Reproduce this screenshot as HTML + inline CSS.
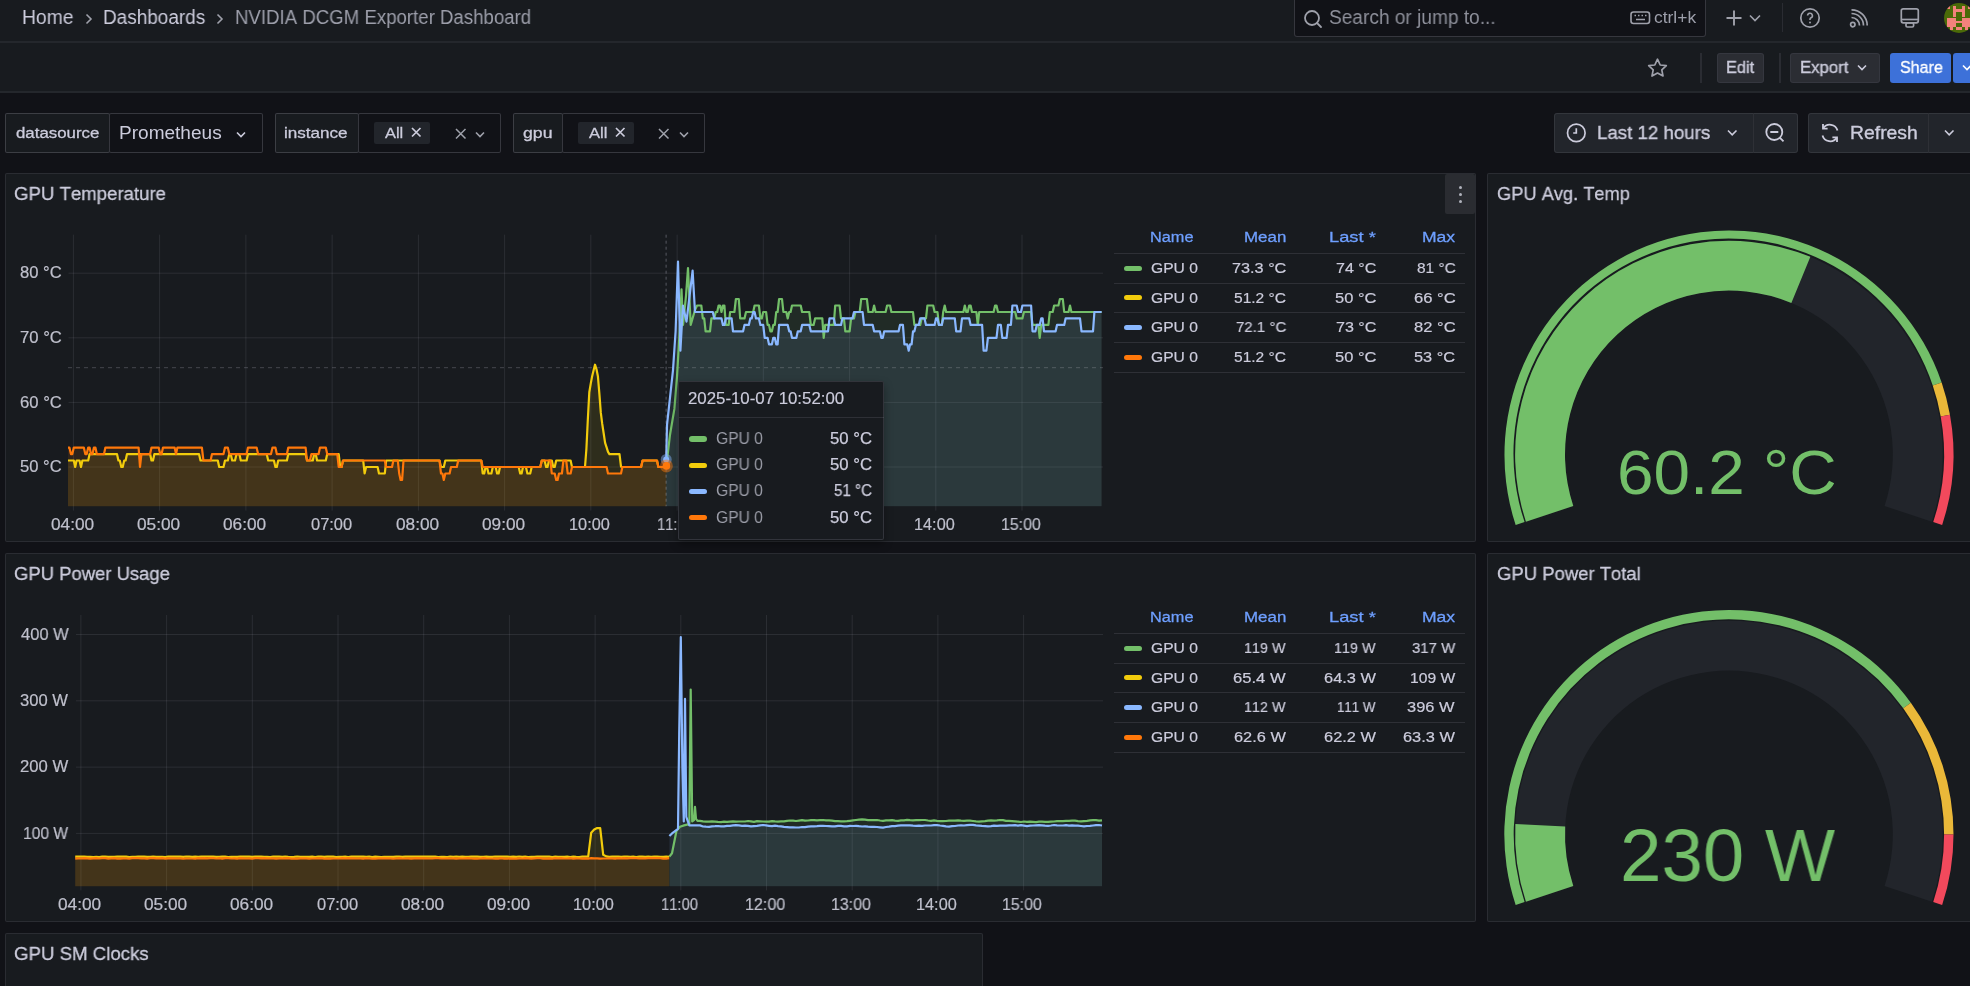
<!DOCTYPE html>
<html><head><meta charset="utf-8"><style>
html,body{margin:0;padding:0;width:1970px;height:986px;overflow:hidden;background:#111217}
body{position:relative;font-family:"Liberation Sans",sans-serif}
.r{position:absolute}
.t{position:absolute;white-space:pre;line-height:normal;will-change:transform;font-kerning:none;font-feature-settings:"kern" 0,"liga" 0}
svg.r{overflow:visible}
</style></head><body>
<div class="r" style="left:0.00px;top:0.00px;width:1970.00px;height:41.00px;background:#181b1f;"></div>
<div class="r" style="left:0.00px;top:41.00px;width:1970.00px;height:2.00px;background:#24272c;"></div>
<div class="r" style="left:0.00px;top:43.00px;width:1970.00px;height:48.00px;background:#181b1f;"></div>
<div class="r" style="left:0.00px;top:91.00px;width:1970.00px;height:2.00px;background:#24272c;"></div>
<div class="t" style="left:22.42px;top:6.15px;font-size:19.50px;color:#ccccdc;font-weight:normal;transform:scaleX(0.9889);transform-origin:0 0;">Home</div>
<div class="t" style="left:102.84px;top:6.15px;font-size:19.50px;color:#ccccdc;font-weight:normal;transform:scaleX(0.9724);transform-origin:0 0;">Dashboards</div>
<div class="t" style="left:234.57px;top:6.15px;font-size:19.50px;color:#9d9fab;font-weight:normal;transform:scaleX(0.9555);transform-origin:0 0;">NVIDIA DCGM Exporter Dashboard</div>
<svg class="r" style="left:83px;top:12px" width="12" height="14" viewBox="0 0 12 14"><path d="M3.5 2.5 L8 7 L3.5 11.5" fill="none" stroke="#9fa1ab" stroke-width="1.6"/></svg>
<svg class="r" style="left:214px;top:12px" width="12" height="14" viewBox="0 0 12 14"><path d="M3.5 2.5 L8 7 L3.5 11.5" fill="none" stroke="#9fa1ab" stroke-width="1.6"/></svg>
<div class="r" style="left:1293.50px;top:-5.00px;width:412.50px;height:42.00px;background:#111217;box-shadow:inset 0 0 0 1px rgba(204,204,220,0.2);border-radius:3px;"></div>
<svg class="r" style="left:1302px;top:8px" width="22" height="22" viewBox="0 0 22 22"><circle cx="10" cy="10" r="7" fill="none" stroke="#9fa1ab" stroke-width="1.8"/><path d="M15 15 L19 19" stroke="#9fa1ab" stroke-width="1.8" stroke-linecap="round"/></svg>
<div class="t" style="left:1328.83px;top:6.35px;font-size:19.50px;color:#8e909b;font-weight:normal;transform:scaleX(0.9791);transform-origin:0 0;">Search or jump to...</div>
<svg class="r" style="left:1630px;top:11px" width="21" height="14" viewBox="0 0 21 14"><rect x="1" y="1" width="18.5" height="11.5" rx="2.5" fill="none" stroke="#9fa1ab" stroke-width="1.6"/><path d="M4.5 4.5h1.5M8 4.5h1.5M11.5 4.5h1.5M15 4.5h1.5M6 8.5h9" stroke="#9fa1ab" stroke-width="1.4"/></svg>
<div class="t" style="left:1654.46px;top:7.77px;font-size:16.50px;color:#9d9fab;font-weight:normal;transform:scaleX(1.0560);transform-origin:0 0;">ctrl+k</div>
<svg class="r" style="left:1724px;top:8px" width="20" height="20" viewBox="0 0 20 20"><path d="M10 2.5V17.5M2.5 10H17.5" stroke="#9fa1ab" stroke-width="1.9"/></svg>
<svg class="r" style="left:1749.0px;top:13.7px" width="12" height="8" viewBox="0 0 12 8"><path d="M1 1.5 L6.0 6.5 L11.0 1.5" fill="none" stroke="#9fa1ab" stroke-width="1.6"/></svg>
<div class="r" style="left:1781.50px;top:3.00px;width:1.50px;height:29.00px;background:#2a2c32;"></div>
<svg class="r" style="left:1799px;top:7px" width="22" height="22" viewBox="0 0 22 22"><circle cx="11" cy="11" r="9.2" fill="none" stroke="#9fa1ab" stroke-width="1.7"/><path d="M8.6 8.6a2.4 2.4 0 1 1 3.4 2.2c-.6.3-1 .8-1 1.5v.6" fill="none" stroke="#9fa1ab" stroke-width="1.6"/><circle cx="11" cy="15.4" r="1" fill="#9fa1ab"/></svg>
<svg class="r" style="left:1849px;top:8px" width="21" height="21" viewBox="0 0 21 21"><circle cx="3.8" cy="16.6" r="2.2" fill="none" stroke="#9fa1ab" stroke-width="1.7"/><path d="M2.5 9.5a8 8 0 0 1 8 8M2.5 5.5a12 12 0 0 1 12 12M2.5 1.8a15.7 15.7 0 0 1 15.7 15.7" fill="none" stroke="#9fa1ab" stroke-width="1.7"/></svg>
<svg class="r" style="left:1899px;top:7px" width="22" height="22" viewBox="0 0 22 22"><rect x="2.3" y="1.8" width="17" height="14" rx="2" fill="none" stroke="#9fa1ab" stroke-width="1.7"/><path d="M2.3 12.5h17" stroke="#9fa1ab" stroke-width="1.7"/><rect x="7" y="16" width="7.6" height="4" rx="1.3" fill="none" stroke="#9fa1ab" stroke-width="1.7"/></svg>
<div class="r" style="left:1943.9px;top:2.7px;width:30.5px;height:30.5px;border-radius:50%;background:#4b6a08;overflow:hidden"><div class="r" style="left:3.1px;top:2.7px;width:3.0px;height:3.5px;background:#f3827c"></div><div class="r" style="left:9.2px;top:3.1px;width:3.1px;height:11.2px;background:#f3827c"></div><div class="r" style="left:18.1px;top:3.1px;width:3.0px;height:11.2px;background:#f3827c"></div><div class="r" style="left:9.2px;top:6.2px;width:11.9px;height:3.4px;background:#f3827c"></div><div class="r" style="left:24.3px;top:3.1px;width:3.8px;height:3.1px;background:#f3827c"></div><div class="r" style="left:3.1px;top:15.4px;width:8.8px;height:8.9px;background:#f3827c"></div><div class="r" style="left:6.5px;top:24.3px;width:2.6px;height:2.7px;background:#f3827c"></div><div class="r" style="left:18.1px;top:15.4px;width:10.0px;height:8.9px;background:#f3827c"></div><div class="r" style="left:21.6px;top:24.3px;width:2.5px;height:2.7px;background:#f3827c"></div><div class="r" style="left:12.3px;top:18.1px;width:5.8px;height:2.3px;background:#f3827c"></div><div class="r" style="left:12.3px;top:24.3px;width:5.8px;height:2.7px;background:#f3827c"></div></div>
<svg class="r" style="left:1646px;top:57px" width="23" height="22" viewBox="0 0 23 22"><path d="M11.5 2.2 L14.2 8 L20.3 8.7 L15.8 12.9 L17 19 L11.5 16 L6 19 L7.2 12.9 L2.7 8.7 L8.8 8 Z" fill="none" stroke="#9fa1ab" stroke-width="1.7" stroke-linejoin="round"/></svg>
<div class="r" style="left:1700.30px;top:53.00px;width:1.50px;height:30.00px;background:#2a2c32;"></div>
<div class="r" style="left:1716.80px;top:53.00px;width:47.20px;height:30.00px;background:#2b2d33;box-shadow:inset 0 0 0 1px rgba(204,204,220,0.07);border-radius:3px;"></div>
<div class="t" style="left:1725.95px;top:57.62px;font-size:17.00px;color:#ccccdc;font-weight:normal;transform:scaleX(0.9649);transform-origin:0 0;-webkit-text-stroke:0.35px #ccccdc;">Edit</div>
<div class="r" style="left:1779.00px;top:53.00px;width:1.50px;height:30.00px;background:#2a2c32;"></div>
<div class="r" style="left:1790.00px;top:53.00px;width:90.00px;height:30.00px;background:#2b2d33;box-shadow:inset 0 0 0 1px rgba(204,204,220,0.07);border-radius:3px;"></div>
<div class="t" style="left:1799.63px;top:57.62px;font-size:17.00px;color:#ccccdc;font-weight:normal;transform:scaleX(0.9850);transform-origin:0 0;-webkit-text-stroke:0.35px #ccccdc;">Export</div>
<svg class="r" style="left:1856.6px;top:63.9px" width="10" height="7" viewBox="0 0 10 7"><path d="M1 1.5 L5.0 5.5 L9.0 1.5" fill="none" stroke="#ccccdc" stroke-width="1.6"/></svg>
<div class="r" style="left:1890.20px;top:53.00px;width:61.20px;height:30.00px;background:#3d71d9;border-radius:3px;"></div>
<div class="t" style="left:1899.77px;top:57.62px;font-size:17.00px;color:#ffffff;font-weight:normal;transform:scaleX(0.9444);transform-origin:0 0;-webkit-text-stroke:0.35px #ffffff;">Share</div>
<div class="r" style="left:1953.20px;top:53.00px;width:21.80px;height:30.00px;background:#3d71d9;border-radius:3px;"></div>
<svg class="r" style="left:1962.0px;top:63.9px" width="10" height="7" viewBox="0 0 10 7"><path d="M1 1.5 L5.0 5.5 L9.0 1.5" fill="none" stroke="#ffffff" stroke-width="1.6"/></svg>
<div class="r" style="left:5.00px;top:113.00px;width:105.00px;height:40.00px;background:#181b1f;box-shadow:inset 0 0 0 1px rgba(204,204,220,0.2);border-radius:2px;"></div>
<div class="t" style="left:15.79px;top:123.67px;font-size:15.50px;color:#ccccdc;font-weight:normal;transform:scaleX(1.0869);transform-origin:0 0;-webkit-text-stroke:0.3px #ccccdc;">datasource</div>
<div class="r" style="left:109.00px;top:113.00px;width:153.50px;height:40.00px;background:#111217;box-shadow:inset 0 0 0 1px rgba(204,204,220,0.2);border-radius:2px;"></div>
<div class="t" style="left:118.94px;top:121.69px;font-size:18.80px;color:#ccccdc;font-weight:normal;transform:scaleX(1.0137);transform-origin:0 0;">Prometheus</div>
<svg class="r" style="left:236.3px;top:130.9px" width="10" height="7" viewBox="0 0 10 7"><path d="M1 1.5 L5.0 5.5 L9.0 1.5" fill="none" stroke="#ccccdc" stroke-width="1.6"/></svg>
<div class="r" style="left:274.50px;top:113.00px;width:84.50px;height:40.00px;background:#181b1f;box-shadow:inset 0 0 0 1px rgba(204,204,220,0.2);border-radius:2px;"></div>
<div class="t" style="left:284.06px;top:123.77px;font-size:15.50px;color:#ccccdc;font-weight:normal;transform:scaleX(1.1017);transform-origin:0 0;-webkit-text-stroke:0.3px #ccccdc;">instance</div>
<div class="r" style="left:358.00px;top:113.00px;width:143.00px;height:40.00px;background:#111217;box-shadow:inset 0 0 0 1px rgba(204,204,220,0.2);border-radius:2px;"></div>
<div class="r" style="left:374.00px;top:121.70px;width:56.00px;height:22.00px;background:#22252b;border-radius:2px;"></div>
<div class="t" style="left:384.87px;top:123.77px;font-size:15.50px;color:#ccccdc;font-weight:normal;transform:scaleX(1.0583);transform-origin:0 0;-webkit-text-stroke:0.3px #ccccdc;">All</div>
<svg class="r" style="left:410.4px;top:126.2px" width="12" height="12" viewBox="0 0 12 12"><path d="M2 2L10.5 10.5M10.5 2L2 10.5" stroke="#ccccdc" stroke-width="1.7"/></svg>
<svg class="r" style="left:453.6px;top:127.4px" width="13" height="13" viewBox="0 0 13 13"><path d="M2 2L11.5 11.5M11.5 2L2 11.5" stroke="#9fa1ab" stroke-width="1.5"/></svg>
<svg class="r" style="left:475.3px;top:130.5px" width="10" height="7" viewBox="0 0 10 7"><path d="M1 1.5 L5.0 5.5 L9.0 1.5" fill="none" stroke="#9fa1ab" stroke-width="1.6"/></svg>
<div class="r" style="left:513.30px;top:113.00px;width:49.70px;height:40.00px;background:#181b1f;box-shadow:inset 0 0 0 1px rgba(204,204,220,0.2);border-radius:2px;"></div>
<div class="t" style="left:523.06px;top:123.77px;font-size:15.50px;color:#ccccdc;font-weight:normal;transform:scaleX(1.1414);transform-origin:0 0;-webkit-text-stroke:0.3px #ccccdc;">gpu</div>
<div class="r" style="left:562.00px;top:113.00px;width:143.00px;height:40.00px;background:#111217;box-shadow:inset 0 0 0 1px rgba(204,204,220,0.2);border-radius:2px;"></div>
<div class="r" style="left:578.00px;top:121.70px;width:55.60px;height:22.00px;background:#22252b;border-radius:2px;"></div>
<div class="t" style="left:588.67px;top:123.77px;font-size:15.50px;color:#ccccdc;font-weight:normal;transform:scaleX(1.0706);transform-origin:0 0;-webkit-text-stroke:0.3px #ccccdc;">All</div>
<svg class="r" style="left:614.2px;top:126.2px" width="12" height="12" viewBox="0 0 12 12"><path d="M2 2L10.5 10.5M10.5 2L2 10.5" stroke="#ccccdc" stroke-width="1.7"/></svg>
<svg class="r" style="left:656.5px;top:127.4px" width="13" height="13" viewBox="0 0 13 13"><path d="M2 2L11.5 11.5M11.5 2L2 11.5" stroke="#9fa1ab" stroke-width="1.5"/></svg>
<svg class="r" style="left:679.0px;top:130.5px" width="10" height="7" viewBox="0 0 10 7"><path d="M1 1.5 L5.0 5.5 L9.0 1.5" fill="none" stroke="#9fa1ab" stroke-width="1.6"/></svg>
<div class="r" style="left:1554.00px;top:113.00px;width:243.50px;height:39.50px;background:#22252b;box-shadow:inset 0 0 0 1px rgba(204,204,220,0.1);border-radius:3px;"></div>
<div class="r" style="left:1753.00px;top:113.00px;width:1.20px;height:39.50px;background:#2e3036;"></div>
<svg class="r" style="left:1565px;top:122px" width="23" height="23" viewBox="0 0 23 23"><circle cx="11.3" cy="10.9" r="8.8" fill="none" stroke="#ccccdc" stroke-width="1.7"/><path d="M11.3 6.3V11H8.2" fill="none" stroke="#ccccdc" stroke-width="1.7"/></svg>
<div class="t" style="left:1596.57px;top:121.52px;font-size:19.20px;color:#ccccdc;font-weight:normal;transform:scaleX(0.9739);transform-origin:0 0;-webkit-text-stroke:0.35px #ccccdc;">Last 12 hours</div>
<svg class="r" style="left:1727.3px;top:129.4px" width="10" height="7" viewBox="0 0 10 7"><path d="M1 1.5 L5.2 5.8 L9.5 1.5" fill="none" stroke="#ccccdc" stroke-width="1.6"/></svg>
<svg class="r" style="left:1763px;top:121px" width="24" height="24" viewBox="0 0 24 24"><circle cx="11.3" cy="11" r="8" fill="none" stroke="#ccccdc" stroke-width="1.8"/><path d="M7.3 11h8M17 16.8l3.5 3.5" fill="none" stroke="#ccccdc" stroke-width="1.8"/></svg>
<div class="r" style="left:1808.00px;top:113.00px;width:167.00px;height:39.50px;background:#22252b;box-shadow:inset 0 0 0 1px rgba(204,204,220,0.1);border-radius:3px;"></div>
<div class="r" style="left:1928.00px;top:113.00px;width:1.20px;height:39.50px;background:#2e3036;"></div>
<svg class="r" style="left:1818px;top:121px" width="24" height="24" viewBox="0 0 24 24"><path d="M19.5 9.5A8 8 0 0 0 5.2 7.2M4.5 14.5a8 8 0 0 0 14.3 2.3" fill="none" stroke="#ccccdc" stroke-width="1.8"/><path d="M5 3v4.6h4.6M19 21v-4.6h-4.6" fill="none" stroke="#ccccdc" stroke-width="1.8"/></svg>
<div class="t" style="left:1850.41px;top:121.52px;font-size:19.20px;color:#ccccdc;font-weight:normal;transform:scaleX(1.0092);transform-origin:0 0;-webkit-text-stroke:0.35px #ccccdc;">Refresh</div>
<svg class="r" style="left:1943.5px;top:129.4px" width="10" height="7" viewBox="0 0 10 7"><path d="M1 1.5 L5.2 5.8 L9.5 1.5" fill="none" stroke="#ccccdc" stroke-width="1.6"/></svg>
<div class="r" style="left:4.50px;top:173.00px;width:1471.50px;height:369.00px;background:#181b1f;box-shadow:inset 0 0 0 1px #2a2c32;border-radius:2px;"></div>
<div class="r" style="left:1487.00px;top:173.00px;width:493.00px;height:369.00px;background:#181b1f;box-shadow:inset 0 0 0 1px #2a2c32;border-radius:2px;"></div>
<div class="r" style="left:4.50px;top:553.00px;width:1471.50px;height:369.00px;background:#181b1f;box-shadow:inset 0 0 0 1px #2a2c32;border-radius:2px;"></div>
<div class="r" style="left:1487.00px;top:553.00px;width:493.00px;height:369.00px;background:#181b1f;box-shadow:inset 0 0 0 1px #2a2c32;border-radius:2px;"></div>
<div class="r" style="left:4.50px;top:933.00px;width:978.00px;height:67.00px;background:#181b1f;box-shadow:inset 0 0 0 1px #2a2c32;border-radius:2px;"></div>
<div class="t" style="left:14.46px;top:182.62px;font-size:19.20px;color:#ccccdc;font-weight:normal;transform:scaleX(0.9695);transform-origin:0 0;-webkit-text-stroke:0.3px #ccccdc;">GPU Temperature</div>
<div class="t" style="left:1497.08px;top:182.62px;font-size:19.20px;color:#ccccdc;font-weight:normal;transform:scaleX(0.9514);transform-origin:0 0;-webkit-text-stroke:0.3px #ccccdc;">GPU Avg. Temp</div>
<div class="t" style="left:14.47px;top:562.62px;font-size:19.20px;color:#ccccdc;font-weight:normal;transform:scaleX(0.9615);transform-origin:0 0;-webkit-text-stroke:0.3px #ccccdc;">GPU Power Usage</div>
<div class="t" style="left:1497.07px;top:562.62px;font-size:19.20px;color:#ccccdc;font-weight:normal;transform:scaleX(0.9631);transform-origin:0 0;-webkit-text-stroke:0.3px #ccccdc;">GPU Power Total</div>
<div class="t" style="left:14.36px;top:942.62px;font-size:19.20px;color:#ccccdc;font-weight:normal;transform:scaleX(0.9714);transform-origin:0 0;-webkit-text-stroke:0.3px #ccccdc;">GPU SM Clocks</div>
<div class="r" style="left:1445.30px;top:173.50px;width:30.20px;height:40.00px;background:#2a2c31;border-radius:2px;"></div>
<div class="r" style="left:1458.7px;top:185.9px;width:3.2px;height:3.2px;border-radius:50%;background:#b0b2bc"></div>
<div class="r" style="left:1458.7px;top:192.9px;width:3.2px;height:3.2px;border-radius:50%;background:#b0b2bc"></div>
<div class="r" style="left:1458.7px;top:199.9px;width:3.2px;height:3.2px;border-radius:50%;background:#b0b2bc"></div>
<svg class="r" style="left:0px;top:170px" width="1480" height="380" viewBox="0 170 1480 380"><path d="M68.5 273.2H1103.0" stroke="rgba(204,204,220,0.11)" stroke-width="1"/><path d="M68.5 337.8H1103.0" stroke="rgba(204,204,220,0.11)" stroke-width="1"/><path d="M68.5 402.4H1103.0" stroke="rgba(204,204,220,0.11)" stroke-width="1"/><path d="M68.5 467.0H1103.0" stroke="rgba(204,204,220,0.11)" stroke-width="1"/><path d="M73.4 234.7V510.6" stroke="rgba(204,204,220,0.11)" stroke-width="1"/><path d="M159.6 234.7V510.6" stroke="rgba(204,204,220,0.11)" stroke-width="1"/><path d="M245.9 234.7V510.6" stroke="rgba(204,204,220,0.11)" stroke-width="1"/><path d="M332.1 234.7V510.6" stroke="rgba(204,204,220,0.11)" stroke-width="1"/><path d="M418.4 234.7V510.6" stroke="rgba(204,204,220,0.11)" stroke-width="1"/><path d="M504.6 234.7V510.6" stroke="rgba(204,204,220,0.11)" stroke-width="1"/><path d="M590.8 234.7V510.6" stroke="rgba(204,204,220,0.11)" stroke-width="1"/><path d="M677.1 234.7V510.6" stroke="rgba(204,204,220,0.11)" stroke-width="1"/><path d="M763.3 234.7V510.6" stroke="rgba(204,204,220,0.11)" stroke-width="1"/><path d="M849.6 234.7V510.6" stroke="rgba(204,204,220,0.11)" stroke-width="1"/><path d="M935.8 234.7V510.6" stroke="rgba(204,204,220,0.11)" stroke-width="1"/><path d="M1022.0 234.7V510.6" stroke="rgba(204,204,220,0.11)" stroke-width="1"/><path d="M666.2 467.0 L670.0 434.7 L674.4 408.9 L677.0 376.6 L680.0 324.9 L681.5 289.4 L683.0 324.9 L686.0 295.8 L688.0 268.0 L690.7 324.9 L695.0 310.0 L697.0 305.5 L698.4 305.5 L699.9 305.5 L701.3 305.5 L702.8 318.4 L704.2 318.4 L705.6 331.3 L707.1 331.3 L708.5 331.3 L710.0 331.3 L711.4 318.4 L712.8 318.4 L714.3 318.4 L715.7 312.0 L717.2 312.0 L718.6 305.5 L720.0 305.5 L721.5 312.0 L722.9 305.5 L724.4 305.5 L725.8 324.9 L727.2 324.9 L728.7 324.9 L730.1 312.0 L731.6 312.0 L733.0 312.0 L734.4 312.0 L735.9 299.0 L737.3 299.0 L738.8 299.0 L740.2 318.4 L741.6 318.4 L743.1 318.4 L744.5 318.4 L746.0 312.0 L747.4 312.0 L748.8 312.0 L750.3 312.0 L751.7 312.0 L753.2 312.0 L754.6 305.5 L756.0 305.5 L757.5 305.5 L758.9 305.5 L760.4 318.4 L761.8 318.4 L763.2 312.0 L764.7 312.0 L766.1 312.0 L767.6 324.9 L769.0 324.9 L770.4 331.3 L771.9 331.3 L773.3 324.9 L774.8 324.9 L776.2 312.0 L777.6 312.0 L779.1 299.0 L780.5 299.0 L782.0 299.0 L783.4 312.0 L784.8 312.0 L786.3 312.0 L787.7 318.4 L789.2 312.0 L790.6 312.0 L792.0 305.5 L793.5 305.5 L794.9 305.5 L796.4 305.5 L797.8 305.5 L799.2 305.5 L800.7 305.5 L802.1 312.0 L803.6 312.0 L805.0 312.0 L806.4 312.0 L807.9 312.0 L809.3 312.0 L810.8 324.9 L812.2 324.9 L813.6 324.9 L815.1 318.4 L816.5 318.4 L818.0 318.4 L819.4 318.4 L820.8 318.4 L822.3 318.4 L823.7 337.8 L825.2 324.9 L826.6 324.9 L828.0 324.9 L829.5 324.9 L830.9 324.9 L832.4 324.9 L833.8 324.9 L835.2 305.5 L836.7 305.5 L838.1 305.5 L839.6 305.5 L841.0 318.4 L842.4 318.4 L843.9 318.4 L845.3 331.3 L846.8 331.3 L848.2 331.3 L849.6 331.3 L851.1 318.4 L852.5 318.4 L854.0 318.4 L855.4 312.0 L856.8 312.0 L858.3 312.0 L859.7 312.0 L861.2 299.0 L862.6 299.0 L864.0 299.0 L865.5 299.0 L866.9 299.0 L868.4 312.0 L869.8 312.0 L871.2 312.0 L872.7 312.0 L874.1 305.5 L875.6 312.0 L877.0 312.0 L878.4 312.0 L879.9 312.0 L881.3 312.0 L882.8 312.0 L884.2 312.0 L885.6 312.0 L887.1 305.5 L888.5 305.5 L890.0 305.5 L891.4 312.0 L892.8 312.0 L894.3 312.0 L895.7 312.0 L897.2 312.0 L898.6 312.0 L900.0 312.0 L901.5 312.0 L902.9 312.0 L904.4 312.0 L905.8 312.0 L907.2 312.0 L908.7 312.0 L910.1 312.0 L911.6 312.0 L913.0 312.0 L914.4 324.9 L915.9 324.9 L917.3 324.9 L918.8 324.9 L920.2 324.9 L921.6 318.4 L923.1 318.4 L924.5 318.4 L926.0 318.4 L927.4 305.5 L928.8 305.5 L930.3 305.5 L931.7 305.5 L933.2 305.5 L934.6 312.0 L936.0 312.0 L937.5 312.0 L938.9 324.9 L940.4 324.9 L941.8 324.9 L943.2 312.0 L944.7 305.5 L946.1 312.0 L947.6 312.0 L949.0 312.0 L950.4 312.0 L951.9 312.0 L953.3 312.0 L954.8 312.0 L956.2 312.0 L957.6 312.0 L959.1 312.0 L960.5 312.0 L962.0 312.0 L963.4 312.0 L964.8 305.5 L966.3 312.0 L967.7 312.0 L969.2 305.5 L970.6 305.5 L972.0 312.0 L973.5 312.0 L974.9 312.0 L976.4 312.0 L977.8 324.9 L979.2 312.0 L980.7 312.0 L982.1 312.0 L983.6 312.0 L985.0 312.0 L986.4 312.0 L987.9 312.0 L989.3 312.0 L990.8 312.0 L992.2 312.0 L993.6 312.0 L995.1 305.5 L996.5 305.5 L998.0 312.0 L999.4 312.0 L1000.8 312.0 L1002.3 312.0 L1003.7 312.0 L1005.2 312.0 L1006.6 312.0 L1008.0 312.0 L1009.5 312.0 L1010.9 312.0 L1012.4 312.0 L1013.8 312.0 L1015.2 312.0 L1016.7 318.4 L1018.1 318.4 L1019.6 318.4 L1021.0 318.4 L1022.4 318.4 L1023.9 312.0 L1025.3 312.0 L1026.8 312.0 L1028.2 312.0 L1029.6 312.0 L1031.1 312.0 L1032.5 324.9 L1034.0 324.9 L1035.4 324.9 L1036.8 324.9 L1038.3 324.9 L1039.7 337.8 L1041.2 324.9 L1042.6 324.9 L1044.0 324.9 L1045.5 324.9 L1046.9 324.9 L1048.4 324.9 L1049.8 312.0 L1051.2 312.0 L1052.7 312.0 L1054.1 305.5 L1055.6 305.5 L1057.0 305.5 L1058.4 305.5 L1059.9 299.0 L1061.3 299.0 L1062.8 299.0 L1064.2 312.0 L1065.6 312.0 L1067.1 312.0 L1068.5 312.0 L1070.0 305.5 L1071.4 312.0 L1072.8 312.0 L1074.3 312.0 L1075.7 312.0 L1077.2 312.0 L1078.6 312.0 L1080.0 312.0 L1081.5 312.0 L1082.9 312.0 L1084.4 312.0 L1085.8 312.0 L1087.2 312.0 L1088.7 312.0 L1090.1 312.0 L1091.6 312.0 L1093.0 312.0 L1094.4 312.0 L1095.9 312.0 L1097.3 312.0 L1098.8 312.0 L1100.2 312.0 L1101.6 312.0 L1101.6 506.3 L666.2 506.3 Z" fill="#73bf69" fill-opacity="0.10"/><path d="M666.2 460.5 L667.0 425.0 L673.0 370.1 L675.6 331.3 L678.0 261.6 L680.4 350.7 L682.9 305.5 L686.5 321.6 L692.6 270.6 L695.0 312.0 L697.0 312.0 L698.4 312.0 L699.9 312.0 L701.3 312.0 L702.8 312.0 L704.2 312.0 L705.6 312.0 L707.1 312.0 L708.5 312.0 L710.0 312.0 L711.4 312.0 L712.8 312.0 L714.3 318.4 L715.7 318.4 L717.2 318.4 L718.6 318.4 L720.0 318.4 L721.5 318.4 L722.9 324.9 L724.4 324.9 L725.8 318.4 L727.2 318.4 L728.7 318.4 L730.1 318.4 L731.6 318.4 L733.0 331.3 L734.4 331.3 L735.9 331.3 L737.3 331.3 L738.8 331.3 L740.2 331.3 L741.6 331.3 L743.1 331.3 L744.5 324.9 L746.0 324.9 L747.4 324.9 L748.8 324.9 L750.3 318.4 L751.7 318.4 L753.2 312.0 L754.6 312.0 L756.0 318.4 L757.5 318.4 L758.9 318.4 L760.4 324.9 L761.8 324.9 L763.2 324.9 L764.7 337.8 L766.1 337.8 L767.6 337.8 L769.0 344.3 L770.4 344.3 L771.9 344.3 L773.3 337.8 L774.8 337.8 L776.2 344.3 L777.6 344.3 L779.1 324.9 L780.5 324.9 L782.0 324.9 L783.4 324.9 L784.8 324.9 L786.3 324.9 L787.7 324.9 L789.2 331.3 L790.6 331.3 L792.0 337.8 L793.5 337.8 L794.9 337.8 L796.4 337.8 L797.8 331.3 L799.2 331.3 L800.7 331.3 L802.1 324.9 L803.6 324.9 L805.0 324.9 L806.4 324.9 L807.9 324.9 L809.3 324.9 L810.8 331.3 L812.2 331.3 L813.6 331.3 L815.1 331.3 L816.5 331.3 L818.0 331.3 L819.4 331.3 L820.8 331.3 L822.3 331.3 L823.7 331.3 L825.2 331.3 L826.6 331.3 L828.0 331.3 L829.5 318.4 L830.9 318.4 L832.4 318.4 L833.8 318.4 L835.2 324.9 L836.7 324.9 L838.1 324.9 L839.6 324.9 L841.0 324.9 L842.4 318.4 L843.9 318.4 L845.3 318.4 L846.8 318.4 L848.2 318.4 L849.6 318.4 L851.1 318.4 L852.5 318.4 L854.0 312.0 L855.4 312.0 L856.8 312.0 L858.3 312.0 L859.7 312.0 L861.2 312.0 L862.6 312.0 L864.0 324.9 L865.5 324.9 L866.9 324.9 L868.4 324.9 L869.8 324.9 L871.2 324.9 L872.7 324.9 L874.1 331.3 L875.6 331.3 L877.0 331.3 L878.4 331.3 L879.9 331.3 L881.3 337.8 L882.8 337.8 L884.2 331.3 L885.6 331.3 L887.1 331.3 L888.5 331.3 L890.0 331.3 L891.4 331.3 L892.8 331.3 L894.3 331.3 L895.7 331.3 L897.2 331.3 L898.6 331.3 L900.0 324.9 L901.5 324.9 L902.9 324.9 L904.4 344.3 L905.8 344.3 L907.2 344.3 L908.7 350.7 L910.1 344.3 L911.6 344.3 L913.0 331.3 L914.4 331.3 L915.9 324.9 L917.3 324.9 L918.8 324.9 L920.2 318.4 L921.6 318.4 L923.1 318.4 L924.5 318.4 L926.0 324.9 L927.4 324.9 L928.8 324.9 L930.3 324.9 L931.7 324.9 L933.2 324.9 L934.6 324.9 L936.0 318.4 L937.5 318.4 L938.9 324.9 L940.4 324.9 L941.8 324.9 L943.2 318.4 L944.7 318.4 L946.1 318.4 L947.6 318.4 L949.0 318.4 L950.4 318.4 L951.9 318.4 L953.3 318.4 L954.8 318.4 L956.2 331.3 L957.6 331.3 L959.1 331.3 L960.5 331.3 L962.0 318.4 L963.4 318.4 L964.8 318.4 L966.3 318.4 L967.7 318.4 L969.2 318.4 L970.6 324.9 L972.0 324.9 L973.5 324.9 L974.9 324.9 L976.4 324.9 L977.8 324.9 L979.2 324.9 L980.7 324.9 L982.1 324.9 L983.6 350.7 L985.0 350.7 L986.4 350.7 L987.9 337.8 L989.3 337.8 L990.8 337.8 L992.2 337.8 L993.6 337.8 L995.1 337.8 L996.5 337.8 L998.0 324.9 L999.4 324.9 L1000.8 324.9 L1002.3 337.8 L1003.7 337.8 L1005.2 337.8 L1006.6 337.8 L1008.0 324.9 L1009.5 324.9 L1010.9 324.9 L1012.4 305.5 L1013.8 305.5 L1015.2 305.5 L1016.7 305.5 L1018.1 312.0 L1019.6 312.0 L1021.0 312.0 L1022.4 305.5 L1023.9 305.5 L1025.3 305.5 L1026.8 305.5 L1028.2 305.5 L1029.6 305.5 L1031.1 305.5 L1032.5 331.3 L1034.0 331.3 L1035.4 331.3 L1036.8 324.9 L1038.3 324.9 L1039.7 324.9 L1041.2 318.4 L1042.6 318.4 L1044.0 331.3 L1045.5 331.3 L1046.9 331.3 L1048.4 331.3 L1049.8 331.3 L1051.2 331.3 L1052.7 331.3 L1054.1 331.3 L1055.6 331.3 L1057.0 324.9 L1058.4 324.9 L1059.9 324.9 L1061.3 324.9 L1062.8 324.9 L1064.2 324.9 L1065.6 318.4 L1067.1 318.4 L1068.5 318.4 L1070.0 318.4 L1071.4 318.4 L1072.8 318.4 L1074.3 318.4 L1075.7 318.4 L1077.2 318.4 L1078.6 318.4 L1080.0 318.4 L1081.5 331.3 L1082.9 331.3 L1084.4 331.3 L1085.8 331.3 L1087.2 331.3 L1088.7 331.3 L1090.1 331.3 L1091.6 331.3 L1093.0 331.3 L1094.4 312.0 L1095.9 312.0 L1097.3 312.0 L1098.8 312.0 L1100.2 312.0 L1101.6 312.0 L1101.6 506.3 L666.2 506.3 Z" fill="#8ab8ff" fill-opacity="0.10"/><path d="M68.0 447.6 L69.4 447.6 L70.9 454.1 L72.3 454.1 L73.8 447.6 L75.2 447.6 L76.6 447.6 L78.1 447.6 L79.5 447.6 L81.0 447.6 L82.4 447.6 L83.8 447.6 L85.3 454.1 L86.7 454.1 L88.2 447.6 L89.6 447.6 L91.0 454.1 L92.5 454.1 L93.9 447.6 L95.4 447.6 L96.8 454.1 L98.2 454.1 L99.7 454.1 L101.1 454.1 L102.6 454.1 L104.0 454.1 L105.4 447.6 L106.9 447.6 L108.3 447.6 L109.8 447.6 L111.2 447.6 L112.6 447.6 L114.1 447.6 L115.5 447.6 L117.0 447.6 L118.4 447.6 L119.8 447.6 L121.3 447.6 L122.7 447.6 L124.2 447.6 L125.6 447.6 L127.0 447.6 L128.5 447.6 L129.9 447.6 L131.4 447.6 L132.8 447.6 L134.2 447.6 L135.7 447.6 L137.1 447.6 L138.6 447.6 L140.0 467.0 L141.4 454.1 L142.9 454.1 L144.3 454.1 L145.8 454.1 L147.2 454.1 L148.6 454.1 L150.1 454.1 L151.5 447.6 L153.0 447.6 L154.4 447.6 L155.8 447.6 L157.3 447.6 L158.7 447.6 L160.2 454.1 L161.6 454.1 L163.0 447.6 L164.5 447.6 L165.9 447.6 L167.4 447.6 L168.8 447.6 L170.2 447.6 L171.7 447.6 L173.1 447.6 L174.6 447.6 L176.0 454.1 L177.4 447.6 L178.9 447.6 L180.3 447.6 L181.8 447.6 L183.2 447.6 L184.6 447.6 L186.1 447.6 L187.5 447.6 L189.0 447.6 L190.4 447.6 L191.8 447.6 L193.3 447.6 L194.7 447.6 L196.2 447.6 L197.6 447.6 L199.0 447.6 L200.5 447.6 L201.9 447.6 L203.4 460.5 L204.8 460.5 L206.2 460.5 L207.7 460.5 L209.1 460.5 L210.6 460.5 L212.0 454.1 L213.4 454.1 L214.9 454.1 L216.3 454.1 L217.8 454.1 L219.2 454.1 L220.6 454.1 L222.1 454.1 L223.5 454.1 L225.0 447.6 L226.4 447.6 L227.8 447.6 L229.3 454.1 L230.7 454.1 L232.2 454.1 L233.6 454.1 L235.0 454.1 L236.5 454.1 L237.9 454.1 L239.4 454.1 L240.8 454.1 L242.2 454.1 L243.7 454.1 L245.1 454.1 L246.6 454.1 L248.0 447.6 L249.4 447.6 L250.9 447.6 L252.3 447.6 L253.8 447.6 L255.2 447.6 L256.6 447.6 L258.1 454.1 L259.5 454.1 L261.0 454.1 L262.4 454.1 L263.8 454.1 L265.3 454.1 L266.7 454.1 L268.2 454.1 L269.6 454.1 L271.0 454.1 L272.5 447.6 L273.9 447.6 L275.4 447.6 L276.8 454.1 L278.2 454.1 L279.7 454.1 L281.1 454.1 L282.6 454.1 L284.0 454.1 L285.4 454.1 L286.9 454.1 L288.3 447.6 L289.8 447.6 L291.2 447.6 L292.6 447.6 L294.1 447.6 L295.5 447.6 L297.0 447.6 L298.4 447.6 L299.8 447.6 L301.3 447.6 L302.7 447.6 L304.2 447.6 L305.6 447.6 L307.0 460.5 L308.5 460.5 L309.9 460.5 L311.4 454.1 L312.8 454.1 L314.2 454.1 L315.7 454.1 L317.1 454.1 L318.6 454.1 L320.0 447.6 L321.4 447.6 L322.9 447.6 L324.3 447.6 L325.8 447.6 L327.2 454.1 L328.6 454.1 L330.1 454.1 L331.5 454.1 L333.0 454.1 L334.4 454.1 L335.8 454.1 L337.3 454.1 L338.7 467.0 L340.2 467.0 L341.6 467.0 L343.0 460.5 L344.5 460.5 L345.9 460.5 L347.4 460.5 L348.8 460.5 L350.2 460.5 L351.7 460.5 L353.1 460.5 L354.6 460.5 L356.0 460.5 L357.4 460.5 L358.9 460.5 L360.3 460.5 L361.8 460.5 L363.2 460.5 L364.6 460.5 L366.1 460.5 L367.5 460.5 L369.0 460.5 L370.4 460.5 L371.8 460.5 L373.3 460.5 L374.7 460.5 L376.2 460.5 L377.6 460.5 L379.0 460.5 L380.5 460.5 L381.9 460.5 L383.4 460.5 L384.8 460.5 L386.2 467.0 L387.7 467.0 L389.1 467.0 L390.6 467.0 L392.0 467.0 L393.4 460.5 L394.9 460.5 L396.3 460.5 L397.8 460.5 L399.2 473.5 L400.6 479.9 L402.1 479.9 L403.5 460.5 L405.0 460.5 L406.4 460.5 L407.8 460.5 L409.3 460.5 L410.7 460.5 L412.2 460.5 L413.6 460.5 L415.0 460.5 L416.5 460.5 L417.9 460.5 L419.4 460.5 L420.8 460.5 L422.2 460.5 L423.7 460.5 L425.1 460.5 L426.6 460.5 L428.0 460.5 L429.4 460.5 L430.9 460.5 L432.3 460.5 L433.8 460.5 L435.2 460.5 L436.6 460.5 L438.1 460.5 L439.5 460.5 L441.0 473.5 L442.4 473.5 L443.8 479.9 L445.3 473.5 L446.7 473.5 L448.2 473.5 L449.6 473.5 L451.0 467.0 L452.5 467.0 L453.9 467.0 L455.4 467.0 L456.8 467.0 L458.2 460.5 L459.7 460.5 L461.1 460.5 L462.6 460.5 L464.0 460.5 L465.4 460.5 L466.9 460.5 L468.3 460.5 L469.8 460.5 L471.2 460.5 L472.6 460.5 L474.1 460.5 L475.5 460.5 L477.0 460.5 L478.4 460.5 L479.8 460.5 L481.3 460.5 L482.7 467.0 L484.2 467.0 L485.6 467.0 L487.0 467.0 L488.5 467.0 L489.9 467.0 L491.4 467.0 L492.8 467.0 L494.2 467.0 L495.7 467.0 L497.1 467.0 L498.6 467.0 L500.0 467.0 L501.4 467.0 L502.9 467.0 L504.3 467.0 L505.8 467.0 L507.2 467.0 L508.6 467.0 L510.1 467.0 L511.5 467.0 L513.0 467.0 L514.4 467.0 L515.8 467.0 L517.3 467.0 L518.7 467.0 L520.2 467.0 L521.6 467.0 L523.0 467.0 L524.5 467.0 L525.9 467.0 L527.4 467.0 L528.8 467.0 L530.2 467.0 L531.7 467.0 L533.1 467.0 L534.6 467.0 L536.0 467.0 L537.4 467.0 L538.9 467.0 L540.3 467.0 L541.8 460.5 L543.2 460.5 L544.6 460.5 L546.1 460.5 L547.5 460.5 L549.0 460.5 L550.4 460.5 L551.8 473.5 L553.3 473.5 L554.7 473.5 L556.2 479.9 L557.6 479.9 L559.0 473.5 L560.5 473.5 L561.9 473.5 L563.4 460.5 L564.8 460.5 L566.2 460.5 L567.7 473.5 L569.1 473.5 L570.6 473.5 L572.0 467.0 L573.4 467.0 L574.9 467.0 L576.3 467.0 L577.8 467.0 L579.2 467.0 L580.6 467.0 L582.1 467.0 L583.5 467.0 L585.0 467.0 L586.4 467.0 L587.8 467.0 L589.3 467.0 L590.7 467.0 L592.2 467.0 L593.6 467.0 L595.0 467.0 L596.5 467.0 L597.9 467.0 L599.4 467.0 L600.8 467.0 L602.2 467.0 L603.7 467.0 L605.1 467.0 L606.6 467.0 L608.0 473.5 L609.4 473.5 L610.9 473.5 L612.3 473.5 L613.8 473.5 L615.2 473.5 L616.6 473.5 L618.1 473.5 L619.5 473.5 L621.0 473.5 L622.4 467.0 L623.8 467.0 L625.3 467.0 L626.7 467.0 L628.2 467.0 L629.6 467.0 L631.0 467.0 L632.5 467.0 L633.9 467.0 L635.4 467.0 L636.8 467.0 L638.2 467.0 L639.7 467.0 L641.1 467.0 L642.6 460.5 L644.0 460.5 L645.4 460.5 L646.9 460.5 L648.3 460.5 L649.8 460.5 L651.2 460.5 L652.6 460.5 L654.1 460.5 L655.5 460.5 L657.0 460.5 L658.4 467.0 L659.8 467.0 L661.3 467.0 L662.7 467.0 L664.2 467.0 L665.6 467.0 L666.2 467.0 L666.2 506.3 L68.0 506.3 Z" fill="#ff780a" fill-opacity="0.10"/><path d="M68.0 460.5 L69.4 460.5 L70.9 460.5 L72.3 460.5 L73.8 460.5 L75.2 467.0 L76.6 460.5 L78.1 460.5 L79.5 460.5 L81.0 467.0 L82.4 460.5 L83.8 460.5 L85.3 460.5 L86.7 460.5 L88.2 460.5 L89.6 454.1 L91.0 454.1 L92.5 454.1 L93.9 454.1 L95.4 454.1 L96.8 454.1 L98.2 454.1 L99.7 454.1 L101.1 454.1 L102.6 454.1 L104.0 454.1 L105.4 454.1 L106.9 454.1 L108.3 454.1 L109.8 454.1 L111.2 454.1 L112.6 454.1 L114.1 454.1 L115.5 454.1 L117.0 454.1 L118.4 460.5 L119.8 460.5 L121.3 467.0 L122.7 467.0 L124.2 460.5 L125.6 460.5 L127.0 454.1 L128.5 454.1 L129.9 454.1 L131.4 454.1 L132.8 454.1 L134.2 454.1 L135.7 454.1 L137.1 454.1 L138.6 454.1 L140.0 454.1 L141.4 454.1 L142.9 454.1 L144.3 454.1 L145.8 454.1 L147.2 454.1 L148.6 454.1 L150.1 454.1 L151.5 460.5 L153.0 460.5 L154.4 454.1 L155.8 454.1 L157.3 454.1 L158.7 454.1 L160.2 454.1 L161.6 454.1 L163.0 454.1 L164.5 454.1 L165.9 454.1 L167.4 454.1 L168.8 454.1 L170.2 454.1 L171.7 454.1 L173.1 454.1 L174.6 454.1 L176.0 454.1 L177.4 454.1 L178.9 454.1 L180.3 454.1 L181.8 454.1 L183.2 454.1 L184.6 454.1 L186.1 454.1 L187.5 454.1 L189.0 454.1 L190.4 454.1 L191.8 454.1 L193.3 454.1 L194.7 454.1 L196.2 454.1 L197.6 454.1 L199.0 454.1 L200.5 460.5 L201.9 460.5 L203.4 460.5 L204.8 460.5 L206.2 460.5 L207.7 460.5 L209.1 460.5 L210.6 460.5 L212.0 460.5 L213.4 460.5 L214.9 460.5 L216.3 460.5 L217.8 460.5 L219.2 467.0 L220.6 467.0 L222.1 467.0 L223.5 467.0 L225.0 460.5 L226.4 460.5 L227.8 460.5 L229.3 454.1 L230.7 454.1 L232.2 460.5 L233.6 460.5 L235.0 460.5 L236.5 454.1 L237.9 454.1 L239.4 454.1 L240.8 460.5 L242.2 460.5 L243.7 460.5 L245.1 460.5 L246.6 460.5 L248.0 454.1 L249.4 454.1 L250.9 454.1 L252.3 454.1 L253.8 454.1 L255.2 454.1 L256.6 454.1 L258.1 454.1 L259.5 454.1 L261.0 454.1 L262.4 454.1 L263.8 454.1 L265.3 454.1 L266.7 454.1 L268.2 460.5 L269.6 460.5 L271.0 460.5 L272.5 460.5 L273.9 460.5 L275.4 467.0 L276.8 467.0 L278.2 460.5 L279.7 460.5 L281.1 460.5 L282.6 460.5 L284.0 460.5 L285.4 460.5 L286.9 460.5 L288.3 454.1 L289.8 454.1 L291.2 454.1 L292.6 454.1 L294.1 454.1 L295.5 454.1 L297.0 454.1 L298.4 454.1 L299.8 454.1 L301.3 454.1 L302.7 454.1 L304.2 454.1 L305.6 454.1 L307.0 460.5 L308.5 460.5 L309.9 460.5 L311.4 460.5 L312.8 460.5 L314.2 454.1 L315.7 454.1 L317.1 460.5 L318.6 460.5 L320.0 460.5 L321.4 460.5 L322.9 460.5 L324.3 460.5 L325.8 460.5 L327.2 454.1 L328.6 454.1 L330.1 454.1 L331.5 454.1 L333.0 454.1 L334.4 454.1 L335.8 454.1 L337.3 454.1 L338.7 454.1 L340.2 467.0 L341.6 467.0 L343.0 460.5 L344.5 460.5 L345.9 460.5 L347.4 460.5 L348.8 460.5 L350.2 460.5 L351.7 460.5 L353.1 460.5 L354.6 460.5 L356.0 460.5 L357.4 460.5 L358.9 460.5 L360.3 460.5 L361.8 460.5 L363.2 460.5 L364.6 473.5 L366.1 467.0 L367.5 467.0 L369.0 467.0 L370.4 467.0 L371.8 467.0 L373.3 467.0 L374.7 467.0 L376.2 467.0 L377.6 467.0 L379.0 473.5 L380.5 473.5 L381.9 473.5 L383.4 473.5 L384.8 473.5 L386.2 460.5 L387.7 460.5 L389.1 460.5 L390.6 460.5 L392.0 460.5 L393.4 460.5 L394.9 460.5 L396.3 460.5 L397.8 460.5 L399.2 460.5 L400.6 460.5 L402.1 460.5 L403.5 460.5 L405.0 460.5 L406.4 460.5 L407.8 460.5 L409.3 460.5 L410.7 460.5 L412.2 460.5 L413.6 460.5 L415.0 460.5 L416.5 460.5 L417.9 460.5 L419.4 460.5 L420.8 460.5 L422.2 460.5 L423.7 460.5 L425.1 460.5 L426.6 460.5 L428.0 460.5 L429.4 460.5 L430.9 460.5 L432.3 460.5 L433.8 460.5 L435.2 460.5 L436.6 460.5 L438.1 460.5 L439.5 460.5 L441.0 467.0 L442.4 467.0 L443.8 467.0 L445.3 460.5 L446.7 460.5 L448.2 460.5 L449.6 460.5 L451.0 460.5 L452.5 460.5 L453.9 460.5 L455.4 460.5 L456.8 460.5 L458.2 460.5 L459.7 460.5 L461.1 460.5 L462.6 460.5 L464.0 460.5 L465.4 460.5 L466.9 460.5 L468.3 460.5 L469.8 460.5 L471.2 460.5 L472.6 460.5 L474.1 460.5 L475.5 460.5 L477.0 460.5 L478.4 460.5 L479.8 460.5 L481.3 460.5 L482.7 473.5 L484.2 473.5 L485.6 467.0 L487.0 467.0 L488.5 473.5 L489.9 473.5 L491.4 473.5 L492.8 467.0 L494.2 467.0 L495.7 467.0 L497.1 473.5 L498.6 473.5 L500.0 467.0 L501.4 467.0 L502.9 467.0 L504.3 467.0 L505.8 467.0 L507.2 467.0 L508.6 467.0 L510.1 467.0 L511.5 467.0 L513.0 467.0 L514.4 467.0 L515.8 467.0 L517.3 467.0 L518.7 467.0 L520.2 473.5 L521.6 473.5 L523.0 467.0 L524.5 467.0 L525.9 467.0 L527.4 473.5 L528.8 473.5 L530.2 473.5 L531.7 467.0 L533.1 467.0 L534.6 467.0 L536.0 467.0 L537.4 467.0 L538.9 467.0 L540.3 467.0 L541.8 460.5 L543.2 460.5 L544.6 460.5 L546.1 467.0 L547.5 467.0 L549.0 460.5 L550.4 460.5 L551.8 460.5 L553.3 467.0 L554.7 467.0 L556.2 460.5 L557.6 460.5 L559.0 460.5 L560.5 460.5 L561.9 460.5 L563.4 460.5 L564.8 460.5 L566.2 460.5 L567.7 460.5 L569.1 460.5 L570.6 460.5 L572.0 467.0 L573.4 467.0 L574.9 467.0 L576.3 467.0 L577.8 467.0 L579.2 467.0 L580.6 467.0 L582.1 467.0 L583.5 467.0 L585.0 467.0 L586.4 448.9 L587.8 420.0 L589.3 392.2 L590.7 383.9 L592.2 375.9 L593.6 370.3 L595.0 364.7 L596.5 369.3 L597.9 376.2 L599.4 394.1 L600.8 412.7 L602.2 423.7 L603.7 433.5 L605.1 442.8 L606.6 447.4 L608.0 451.9 L609.4 454.1 L610.9 454.1 L612.3 454.1 L613.8 454.1 L615.2 454.1 L616.6 454.1 L618.1 454.1 L619.5 454.1 L621.0 466.6 L622.4 467.0 L623.8 467.0 L625.3 467.0 L626.7 467.0 L628.2 467.0 L629.6 467.0 L631.0 467.0 L632.5 467.0 L633.9 467.0 L635.4 467.0 L636.8 467.0 L638.2 467.0 L639.7 467.0 L641.1 467.0 L642.6 460.5 L644.0 460.5 L645.4 460.5 L646.9 460.5 L648.3 460.5 L649.8 460.5 L651.2 460.5 L652.6 460.5 L654.1 460.5 L655.5 460.5 L657.0 460.5 L658.4 467.0 L659.8 467.0 L661.3 467.0 L662.7 467.0 L664.2 467.0 L665.6 467.0 L666.2 467.0 L666.2 506.3 L68.0 506.3 Z" fill="#f2cc0c" fill-opacity="0.10"/><path d="M68 367.7H1103" stroke="rgba(204,204,220,0.25)" stroke-width="1" stroke-dasharray="4 4"/><path d="M666.2 467.0 L670.0 434.7 L674.4 408.9 L677.0 376.6 L680.0 324.9 L681.5 289.4 L683.0 324.9 L686.0 295.8 L688.0 268.0 L690.7 324.9 L695.0 310.0 L697.0 305.5 L698.4 305.5 L699.9 305.5 L701.3 305.5 L702.8 318.4 L704.2 318.4 L705.6 331.3 L707.1 331.3 L708.5 331.3 L710.0 331.3 L711.4 318.4 L712.8 318.4 L714.3 318.4 L715.7 312.0 L717.2 312.0 L718.6 305.5 L720.0 305.5 L721.5 312.0 L722.9 305.5 L724.4 305.5 L725.8 324.9 L727.2 324.9 L728.7 324.9 L730.1 312.0 L731.6 312.0 L733.0 312.0 L734.4 312.0 L735.9 299.0 L737.3 299.0 L738.8 299.0 L740.2 318.4 L741.6 318.4 L743.1 318.4 L744.5 318.4 L746.0 312.0 L747.4 312.0 L748.8 312.0 L750.3 312.0 L751.7 312.0 L753.2 312.0 L754.6 305.5 L756.0 305.5 L757.5 305.5 L758.9 305.5 L760.4 318.4 L761.8 318.4 L763.2 312.0 L764.7 312.0 L766.1 312.0 L767.6 324.9 L769.0 324.9 L770.4 331.3 L771.9 331.3 L773.3 324.9 L774.8 324.9 L776.2 312.0 L777.6 312.0 L779.1 299.0 L780.5 299.0 L782.0 299.0 L783.4 312.0 L784.8 312.0 L786.3 312.0 L787.7 318.4 L789.2 312.0 L790.6 312.0 L792.0 305.5 L793.5 305.5 L794.9 305.5 L796.4 305.5 L797.8 305.5 L799.2 305.5 L800.7 305.5 L802.1 312.0 L803.6 312.0 L805.0 312.0 L806.4 312.0 L807.9 312.0 L809.3 312.0 L810.8 324.9 L812.2 324.9 L813.6 324.9 L815.1 318.4 L816.5 318.4 L818.0 318.4 L819.4 318.4 L820.8 318.4 L822.3 318.4 L823.7 337.8 L825.2 324.9 L826.6 324.9 L828.0 324.9 L829.5 324.9 L830.9 324.9 L832.4 324.9 L833.8 324.9 L835.2 305.5 L836.7 305.5 L838.1 305.5 L839.6 305.5 L841.0 318.4 L842.4 318.4 L843.9 318.4 L845.3 331.3 L846.8 331.3 L848.2 331.3 L849.6 331.3 L851.1 318.4 L852.5 318.4 L854.0 318.4 L855.4 312.0 L856.8 312.0 L858.3 312.0 L859.7 312.0 L861.2 299.0 L862.6 299.0 L864.0 299.0 L865.5 299.0 L866.9 299.0 L868.4 312.0 L869.8 312.0 L871.2 312.0 L872.7 312.0 L874.1 305.5 L875.6 312.0 L877.0 312.0 L878.4 312.0 L879.9 312.0 L881.3 312.0 L882.8 312.0 L884.2 312.0 L885.6 312.0 L887.1 305.5 L888.5 305.5 L890.0 305.5 L891.4 312.0 L892.8 312.0 L894.3 312.0 L895.7 312.0 L897.2 312.0 L898.6 312.0 L900.0 312.0 L901.5 312.0 L902.9 312.0 L904.4 312.0 L905.8 312.0 L907.2 312.0 L908.7 312.0 L910.1 312.0 L911.6 312.0 L913.0 312.0 L914.4 324.9 L915.9 324.9 L917.3 324.9 L918.8 324.9 L920.2 324.9 L921.6 318.4 L923.1 318.4 L924.5 318.4 L926.0 318.4 L927.4 305.5 L928.8 305.5 L930.3 305.5 L931.7 305.5 L933.2 305.5 L934.6 312.0 L936.0 312.0 L937.5 312.0 L938.9 324.9 L940.4 324.9 L941.8 324.9 L943.2 312.0 L944.7 305.5 L946.1 312.0 L947.6 312.0 L949.0 312.0 L950.4 312.0 L951.9 312.0 L953.3 312.0 L954.8 312.0 L956.2 312.0 L957.6 312.0 L959.1 312.0 L960.5 312.0 L962.0 312.0 L963.4 312.0 L964.8 305.5 L966.3 312.0 L967.7 312.0 L969.2 305.5 L970.6 305.5 L972.0 312.0 L973.5 312.0 L974.9 312.0 L976.4 312.0 L977.8 324.9 L979.2 312.0 L980.7 312.0 L982.1 312.0 L983.6 312.0 L985.0 312.0 L986.4 312.0 L987.9 312.0 L989.3 312.0 L990.8 312.0 L992.2 312.0 L993.6 312.0 L995.1 305.5 L996.5 305.5 L998.0 312.0 L999.4 312.0 L1000.8 312.0 L1002.3 312.0 L1003.7 312.0 L1005.2 312.0 L1006.6 312.0 L1008.0 312.0 L1009.5 312.0 L1010.9 312.0 L1012.4 312.0 L1013.8 312.0 L1015.2 312.0 L1016.7 318.4 L1018.1 318.4 L1019.6 318.4 L1021.0 318.4 L1022.4 318.4 L1023.9 312.0 L1025.3 312.0 L1026.8 312.0 L1028.2 312.0 L1029.6 312.0 L1031.1 312.0 L1032.5 324.9 L1034.0 324.9 L1035.4 324.9 L1036.8 324.9 L1038.3 324.9 L1039.7 337.8 L1041.2 324.9 L1042.6 324.9 L1044.0 324.9 L1045.5 324.9 L1046.9 324.9 L1048.4 324.9 L1049.8 312.0 L1051.2 312.0 L1052.7 312.0 L1054.1 305.5 L1055.6 305.5 L1057.0 305.5 L1058.4 305.5 L1059.9 299.0 L1061.3 299.0 L1062.8 299.0 L1064.2 312.0 L1065.6 312.0 L1067.1 312.0 L1068.5 312.0 L1070.0 305.5 L1071.4 312.0 L1072.8 312.0 L1074.3 312.0 L1075.7 312.0 L1077.2 312.0 L1078.6 312.0 L1080.0 312.0 L1081.5 312.0 L1082.9 312.0 L1084.4 312.0 L1085.8 312.0 L1087.2 312.0 L1088.7 312.0 L1090.1 312.0 L1091.6 312.0 L1093.0 312.0 L1094.4 312.0 L1095.9 312.0 L1097.3 312.0 L1098.8 312.0 L1100.2 312.0 L1101.6 312.0" fill="none" stroke="#73bf69" stroke-width="2.2" stroke-linejoin="round"/><path d="M68.0 460.5 L69.4 460.5 L70.9 460.5 L72.3 460.5 L73.8 460.5 L75.2 467.0 L76.6 460.5 L78.1 460.5 L79.5 460.5 L81.0 467.0 L82.4 460.5 L83.8 460.5 L85.3 460.5 L86.7 460.5 L88.2 460.5 L89.6 454.1 L91.0 454.1 L92.5 454.1 L93.9 454.1 L95.4 454.1 L96.8 454.1 L98.2 454.1 L99.7 454.1 L101.1 454.1 L102.6 454.1 L104.0 454.1 L105.4 454.1 L106.9 454.1 L108.3 454.1 L109.8 454.1 L111.2 454.1 L112.6 454.1 L114.1 454.1 L115.5 454.1 L117.0 454.1 L118.4 460.5 L119.8 460.5 L121.3 467.0 L122.7 467.0 L124.2 460.5 L125.6 460.5 L127.0 454.1 L128.5 454.1 L129.9 454.1 L131.4 454.1 L132.8 454.1 L134.2 454.1 L135.7 454.1 L137.1 454.1 L138.6 454.1 L140.0 454.1 L141.4 454.1 L142.9 454.1 L144.3 454.1 L145.8 454.1 L147.2 454.1 L148.6 454.1 L150.1 454.1 L151.5 460.5 L153.0 460.5 L154.4 454.1 L155.8 454.1 L157.3 454.1 L158.7 454.1 L160.2 454.1 L161.6 454.1 L163.0 454.1 L164.5 454.1 L165.9 454.1 L167.4 454.1 L168.8 454.1 L170.2 454.1 L171.7 454.1 L173.1 454.1 L174.6 454.1 L176.0 454.1 L177.4 454.1 L178.9 454.1 L180.3 454.1 L181.8 454.1 L183.2 454.1 L184.6 454.1 L186.1 454.1 L187.5 454.1 L189.0 454.1 L190.4 454.1 L191.8 454.1 L193.3 454.1 L194.7 454.1 L196.2 454.1 L197.6 454.1 L199.0 454.1 L200.5 460.5 L201.9 460.5 L203.4 460.5 L204.8 460.5 L206.2 460.5 L207.7 460.5 L209.1 460.5 L210.6 460.5 L212.0 460.5 L213.4 460.5 L214.9 460.5 L216.3 460.5 L217.8 460.5 L219.2 467.0 L220.6 467.0 L222.1 467.0 L223.5 467.0 L225.0 460.5 L226.4 460.5 L227.8 460.5 L229.3 454.1 L230.7 454.1 L232.2 460.5 L233.6 460.5 L235.0 460.5 L236.5 454.1 L237.9 454.1 L239.4 454.1 L240.8 460.5 L242.2 460.5 L243.7 460.5 L245.1 460.5 L246.6 460.5 L248.0 454.1 L249.4 454.1 L250.9 454.1 L252.3 454.1 L253.8 454.1 L255.2 454.1 L256.6 454.1 L258.1 454.1 L259.5 454.1 L261.0 454.1 L262.4 454.1 L263.8 454.1 L265.3 454.1 L266.7 454.1 L268.2 460.5 L269.6 460.5 L271.0 460.5 L272.5 460.5 L273.9 460.5 L275.4 467.0 L276.8 467.0 L278.2 460.5 L279.7 460.5 L281.1 460.5 L282.6 460.5 L284.0 460.5 L285.4 460.5 L286.9 460.5 L288.3 454.1 L289.8 454.1 L291.2 454.1 L292.6 454.1 L294.1 454.1 L295.5 454.1 L297.0 454.1 L298.4 454.1 L299.8 454.1 L301.3 454.1 L302.7 454.1 L304.2 454.1 L305.6 454.1 L307.0 460.5 L308.5 460.5 L309.9 460.5 L311.4 460.5 L312.8 460.5 L314.2 454.1 L315.7 454.1 L317.1 460.5 L318.6 460.5 L320.0 460.5 L321.4 460.5 L322.9 460.5 L324.3 460.5 L325.8 460.5 L327.2 454.1 L328.6 454.1 L330.1 454.1 L331.5 454.1 L333.0 454.1 L334.4 454.1 L335.8 454.1 L337.3 454.1 L338.7 454.1 L340.2 467.0 L341.6 467.0 L343.0 460.5 L344.5 460.5 L345.9 460.5 L347.4 460.5 L348.8 460.5 L350.2 460.5 L351.7 460.5 L353.1 460.5 L354.6 460.5 L356.0 460.5 L357.4 460.5 L358.9 460.5 L360.3 460.5 L361.8 460.5 L363.2 460.5 L364.6 473.5 L366.1 467.0 L367.5 467.0 L369.0 467.0 L370.4 467.0 L371.8 467.0 L373.3 467.0 L374.7 467.0 L376.2 467.0 L377.6 467.0 L379.0 473.5 L380.5 473.5 L381.9 473.5 L383.4 473.5 L384.8 473.5 L386.2 460.5 L387.7 460.5 L389.1 460.5 L390.6 460.5 L392.0 460.5 L393.4 460.5 L394.9 460.5 L396.3 460.5 L397.8 460.5 L399.2 460.5 L400.6 460.5 L402.1 460.5 L403.5 460.5 L405.0 460.5 L406.4 460.5 L407.8 460.5 L409.3 460.5 L410.7 460.5 L412.2 460.5 L413.6 460.5 L415.0 460.5 L416.5 460.5 L417.9 460.5 L419.4 460.5 L420.8 460.5 L422.2 460.5 L423.7 460.5 L425.1 460.5 L426.6 460.5 L428.0 460.5 L429.4 460.5 L430.9 460.5 L432.3 460.5 L433.8 460.5 L435.2 460.5 L436.6 460.5 L438.1 460.5 L439.5 460.5 L441.0 467.0 L442.4 467.0 L443.8 467.0 L445.3 460.5 L446.7 460.5 L448.2 460.5 L449.6 460.5 L451.0 460.5 L452.5 460.5 L453.9 460.5 L455.4 460.5 L456.8 460.5 L458.2 460.5 L459.7 460.5 L461.1 460.5 L462.6 460.5 L464.0 460.5 L465.4 460.5 L466.9 460.5 L468.3 460.5 L469.8 460.5 L471.2 460.5 L472.6 460.5 L474.1 460.5 L475.5 460.5 L477.0 460.5 L478.4 460.5 L479.8 460.5 L481.3 460.5 L482.7 473.5 L484.2 473.5 L485.6 467.0 L487.0 467.0 L488.5 473.5 L489.9 473.5 L491.4 473.5 L492.8 467.0 L494.2 467.0 L495.7 467.0 L497.1 473.5 L498.6 473.5 L500.0 467.0 L501.4 467.0 L502.9 467.0 L504.3 467.0 L505.8 467.0 L507.2 467.0 L508.6 467.0 L510.1 467.0 L511.5 467.0 L513.0 467.0 L514.4 467.0 L515.8 467.0 L517.3 467.0 L518.7 467.0 L520.2 473.5 L521.6 473.5 L523.0 467.0 L524.5 467.0 L525.9 467.0 L527.4 473.5 L528.8 473.5 L530.2 473.5 L531.7 467.0 L533.1 467.0 L534.6 467.0 L536.0 467.0 L537.4 467.0 L538.9 467.0 L540.3 467.0 L541.8 460.5 L543.2 460.5 L544.6 460.5 L546.1 467.0 L547.5 467.0 L549.0 460.5 L550.4 460.5 L551.8 460.5 L553.3 467.0 L554.7 467.0 L556.2 460.5 L557.6 460.5 L559.0 460.5 L560.5 460.5 L561.9 460.5 L563.4 460.5 L564.8 460.5 L566.2 460.5 L567.7 460.5 L569.1 460.5 L570.6 460.5 L572.0 467.0 L573.4 467.0 L574.9 467.0 L576.3 467.0 L577.8 467.0 L579.2 467.0 L580.6 467.0 L582.1 467.0 L583.5 467.0 L585.0 467.0 L586.4 448.9 L587.8 420.0 L589.3 392.2 L590.7 383.9 L592.2 375.9 L593.6 370.3 L595.0 364.7 L596.5 369.3 L597.9 376.2 L599.4 394.1 L600.8 412.7 L602.2 423.7 L603.7 433.5 L605.1 442.8 L606.6 447.4 L608.0 451.9 L609.4 454.1 L610.9 454.1 L612.3 454.1 L613.8 454.1 L615.2 454.1 L616.6 454.1 L618.1 454.1 L619.5 454.1 L621.0 466.6 L622.4 467.0 L623.8 467.0 L625.3 467.0 L626.7 467.0 L628.2 467.0 L629.6 467.0 L631.0 467.0 L632.5 467.0 L633.9 467.0 L635.4 467.0 L636.8 467.0 L638.2 467.0 L639.7 467.0 L641.1 467.0 L642.6 460.5 L644.0 460.5 L645.4 460.5 L646.9 460.5 L648.3 460.5 L649.8 460.5 L651.2 460.5 L652.6 460.5 L654.1 460.5 L655.5 460.5 L657.0 460.5 L658.4 467.0 L659.8 467.0 L661.3 467.0 L662.7 467.0 L664.2 467.0 L665.6 467.0 L666.2 467.0" fill="none" stroke="#f2cc0c" stroke-width="2.2" stroke-linejoin="round"/><path d="M666.2 460.5 L667.0 425.0 L673.0 370.1 L675.6 331.3 L678.0 261.6 L680.4 350.7 L682.9 305.5 L686.5 321.6 L692.6 270.6 L695.0 312.0 L697.0 312.0 L698.4 312.0 L699.9 312.0 L701.3 312.0 L702.8 312.0 L704.2 312.0 L705.6 312.0 L707.1 312.0 L708.5 312.0 L710.0 312.0 L711.4 312.0 L712.8 312.0 L714.3 318.4 L715.7 318.4 L717.2 318.4 L718.6 318.4 L720.0 318.4 L721.5 318.4 L722.9 324.9 L724.4 324.9 L725.8 318.4 L727.2 318.4 L728.7 318.4 L730.1 318.4 L731.6 318.4 L733.0 331.3 L734.4 331.3 L735.9 331.3 L737.3 331.3 L738.8 331.3 L740.2 331.3 L741.6 331.3 L743.1 331.3 L744.5 324.9 L746.0 324.9 L747.4 324.9 L748.8 324.9 L750.3 318.4 L751.7 318.4 L753.2 312.0 L754.6 312.0 L756.0 318.4 L757.5 318.4 L758.9 318.4 L760.4 324.9 L761.8 324.9 L763.2 324.9 L764.7 337.8 L766.1 337.8 L767.6 337.8 L769.0 344.3 L770.4 344.3 L771.9 344.3 L773.3 337.8 L774.8 337.8 L776.2 344.3 L777.6 344.3 L779.1 324.9 L780.5 324.9 L782.0 324.9 L783.4 324.9 L784.8 324.9 L786.3 324.9 L787.7 324.9 L789.2 331.3 L790.6 331.3 L792.0 337.8 L793.5 337.8 L794.9 337.8 L796.4 337.8 L797.8 331.3 L799.2 331.3 L800.7 331.3 L802.1 324.9 L803.6 324.9 L805.0 324.9 L806.4 324.9 L807.9 324.9 L809.3 324.9 L810.8 331.3 L812.2 331.3 L813.6 331.3 L815.1 331.3 L816.5 331.3 L818.0 331.3 L819.4 331.3 L820.8 331.3 L822.3 331.3 L823.7 331.3 L825.2 331.3 L826.6 331.3 L828.0 331.3 L829.5 318.4 L830.9 318.4 L832.4 318.4 L833.8 318.4 L835.2 324.9 L836.7 324.9 L838.1 324.9 L839.6 324.9 L841.0 324.9 L842.4 318.4 L843.9 318.4 L845.3 318.4 L846.8 318.4 L848.2 318.4 L849.6 318.4 L851.1 318.4 L852.5 318.4 L854.0 312.0 L855.4 312.0 L856.8 312.0 L858.3 312.0 L859.7 312.0 L861.2 312.0 L862.6 312.0 L864.0 324.9 L865.5 324.9 L866.9 324.9 L868.4 324.9 L869.8 324.9 L871.2 324.9 L872.7 324.9 L874.1 331.3 L875.6 331.3 L877.0 331.3 L878.4 331.3 L879.9 331.3 L881.3 337.8 L882.8 337.8 L884.2 331.3 L885.6 331.3 L887.1 331.3 L888.5 331.3 L890.0 331.3 L891.4 331.3 L892.8 331.3 L894.3 331.3 L895.7 331.3 L897.2 331.3 L898.6 331.3 L900.0 324.9 L901.5 324.9 L902.9 324.9 L904.4 344.3 L905.8 344.3 L907.2 344.3 L908.7 350.7 L910.1 344.3 L911.6 344.3 L913.0 331.3 L914.4 331.3 L915.9 324.9 L917.3 324.9 L918.8 324.9 L920.2 318.4 L921.6 318.4 L923.1 318.4 L924.5 318.4 L926.0 324.9 L927.4 324.9 L928.8 324.9 L930.3 324.9 L931.7 324.9 L933.2 324.9 L934.6 324.9 L936.0 318.4 L937.5 318.4 L938.9 324.9 L940.4 324.9 L941.8 324.9 L943.2 318.4 L944.7 318.4 L946.1 318.4 L947.6 318.4 L949.0 318.4 L950.4 318.4 L951.9 318.4 L953.3 318.4 L954.8 318.4 L956.2 331.3 L957.6 331.3 L959.1 331.3 L960.5 331.3 L962.0 318.4 L963.4 318.4 L964.8 318.4 L966.3 318.4 L967.7 318.4 L969.2 318.4 L970.6 324.9 L972.0 324.9 L973.5 324.9 L974.9 324.9 L976.4 324.9 L977.8 324.9 L979.2 324.9 L980.7 324.9 L982.1 324.9 L983.6 350.7 L985.0 350.7 L986.4 350.7 L987.9 337.8 L989.3 337.8 L990.8 337.8 L992.2 337.8 L993.6 337.8 L995.1 337.8 L996.5 337.8 L998.0 324.9 L999.4 324.9 L1000.8 324.9 L1002.3 337.8 L1003.7 337.8 L1005.2 337.8 L1006.6 337.8 L1008.0 324.9 L1009.5 324.9 L1010.9 324.9 L1012.4 305.5 L1013.8 305.5 L1015.2 305.5 L1016.7 305.5 L1018.1 312.0 L1019.6 312.0 L1021.0 312.0 L1022.4 305.5 L1023.9 305.5 L1025.3 305.5 L1026.8 305.5 L1028.2 305.5 L1029.6 305.5 L1031.1 305.5 L1032.5 331.3 L1034.0 331.3 L1035.4 331.3 L1036.8 324.9 L1038.3 324.9 L1039.7 324.9 L1041.2 318.4 L1042.6 318.4 L1044.0 331.3 L1045.5 331.3 L1046.9 331.3 L1048.4 331.3 L1049.8 331.3 L1051.2 331.3 L1052.7 331.3 L1054.1 331.3 L1055.6 331.3 L1057.0 324.9 L1058.4 324.9 L1059.9 324.9 L1061.3 324.9 L1062.8 324.9 L1064.2 324.9 L1065.6 318.4 L1067.1 318.4 L1068.5 318.4 L1070.0 318.4 L1071.4 318.4 L1072.8 318.4 L1074.3 318.4 L1075.7 318.4 L1077.2 318.4 L1078.6 318.4 L1080.0 318.4 L1081.5 331.3 L1082.9 331.3 L1084.4 331.3 L1085.8 331.3 L1087.2 331.3 L1088.7 331.3 L1090.1 331.3 L1091.6 331.3 L1093.0 331.3 L1094.4 312.0 L1095.9 312.0 L1097.3 312.0 L1098.8 312.0 L1100.2 312.0 L1101.6 312.0" fill="none" stroke="#8ab8ff" stroke-width="2.2" stroke-linejoin="round"/><path d="M68.0 447.6 L69.4 447.6 L70.9 454.1 L72.3 454.1 L73.8 447.6 L75.2 447.6 L76.6 447.6 L78.1 447.6 L79.5 447.6 L81.0 447.6 L82.4 447.6 L83.8 447.6 L85.3 454.1 L86.7 454.1 L88.2 447.6 L89.6 447.6 L91.0 454.1 L92.5 454.1 L93.9 447.6 L95.4 447.6 L96.8 454.1 L98.2 454.1 L99.7 454.1 L101.1 454.1 L102.6 454.1 L104.0 454.1 L105.4 447.6 L106.9 447.6 L108.3 447.6 L109.8 447.6 L111.2 447.6 L112.6 447.6 L114.1 447.6 L115.5 447.6 L117.0 447.6 L118.4 447.6 L119.8 447.6 L121.3 447.6 L122.7 447.6 L124.2 447.6 L125.6 447.6 L127.0 447.6 L128.5 447.6 L129.9 447.6 L131.4 447.6 L132.8 447.6 L134.2 447.6 L135.7 447.6 L137.1 447.6 L138.6 447.6 L140.0 467.0 L141.4 454.1 L142.9 454.1 L144.3 454.1 L145.8 454.1 L147.2 454.1 L148.6 454.1 L150.1 454.1 L151.5 447.6 L153.0 447.6 L154.4 447.6 L155.8 447.6 L157.3 447.6 L158.7 447.6 L160.2 454.1 L161.6 454.1 L163.0 447.6 L164.5 447.6 L165.9 447.6 L167.4 447.6 L168.8 447.6 L170.2 447.6 L171.7 447.6 L173.1 447.6 L174.6 447.6 L176.0 454.1 L177.4 447.6 L178.9 447.6 L180.3 447.6 L181.8 447.6 L183.2 447.6 L184.6 447.6 L186.1 447.6 L187.5 447.6 L189.0 447.6 L190.4 447.6 L191.8 447.6 L193.3 447.6 L194.7 447.6 L196.2 447.6 L197.6 447.6 L199.0 447.6 L200.5 447.6 L201.9 447.6 L203.4 460.5 L204.8 460.5 L206.2 460.5 L207.7 460.5 L209.1 460.5 L210.6 460.5 L212.0 454.1 L213.4 454.1 L214.9 454.1 L216.3 454.1 L217.8 454.1 L219.2 454.1 L220.6 454.1 L222.1 454.1 L223.5 454.1 L225.0 447.6 L226.4 447.6 L227.8 447.6 L229.3 454.1 L230.7 454.1 L232.2 454.1 L233.6 454.1 L235.0 454.1 L236.5 454.1 L237.9 454.1 L239.4 454.1 L240.8 454.1 L242.2 454.1 L243.7 454.1 L245.1 454.1 L246.6 454.1 L248.0 447.6 L249.4 447.6 L250.9 447.6 L252.3 447.6 L253.8 447.6 L255.2 447.6 L256.6 447.6 L258.1 454.1 L259.5 454.1 L261.0 454.1 L262.4 454.1 L263.8 454.1 L265.3 454.1 L266.7 454.1 L268.2 454.1 L269.6 454.1 L271.0 454.1 L272.5 447.6 L273.9 447.6 L275.4 447.6 L276.8 454.1 L278.2 454.1 L279.7 454.1 L281.1 454.1 L282.6 454.1 L284.0 454.1 L285.4 454.1 L286.9 454.1 L288.3 447.6 L289.8 447.6 L291.2 447.6 L292.6 447.6 L294.1 447.6 L295.5 447.6 L297.0 447.6 L298.4 447.6 L299.8 447.6 L301.3 447.6 L302.7 447.6 L304.2 447.6 L305.6 447.6 L307.0 460.5 L308.5 460.5 L309.9 460.5 L311.4 454.1 L312.8 454.1 L314.2 454.1 L315.7 454.1 L317.1 454.1 L318.6 454.1 L320.0 447.6 L321.4 447.6 L322.9 447.6 L324.3 447.6 L325.8 447.6 L327.2 454.1 L328.6 454.1 L330.1 454.1 L331.5 454.1 L333.0 454.1 L334.4 454.1 L335.8 454.1 L337.3 454.1 L338.7 467.0 L340.2 467.0 L341.6 467.0 L343.0 460.5 L344.5 460.5 L345.9 460.5 L347.4 460.5 L348.8 460.5 L350.2 460.5 L351.7 460.5 L353.1 460.5 L354.6 460.5 L356.0 460.5 L357.4 460.5 L358.9 460.5 L360.3 460.5 L361.8 460.5 L363.2 460.5 L364.6 460.5 L366.1 460.5 L367.5 460.5 L369.0 460.5 L370.4 460.5 L371.8 460.5 L373.3 460.5 L374.7 460.5 L376.2 460.5 L377.6 460.5 L379.0 460.5 L380.5 460.5 L381.9 460.5 L383.4 460.5 L384.8 460.5 L386.2 467.0 L387.7 467.0 L389.1 467.0 L390.6 467.0 L392.0 467.0 L393.4 460.5 L394.9 460.5 L396.3 460.5 L397.8 460.5 L399.2 473.5 L400.6 479.9 L402.1 479.9 L403.5 460.5 L405.0 460.5 L406.4 460.5 L407.8 460.5 L409.3 460.5 L410.7 460.5 L412.2 460.5 L413.6 460.5 L415.0 460.5 L416.5 460.5 L417.9 460.5 L419.4 460.5 L420.8 460.5 L422.2 460.5 L423.7 460.5 L425.1 460.5 L426.6 460.5 L428.0 460.5 L429.4 460.5 L430.9 460.5 L432.3 460.5 L433.8 460.5 L435.2 460.5 L436.6 460.5 L438.1 460.5 L439.5 460.5 L441.0 473.5 L442.4 473.5 L443.8 479.9 L445.3 473.5 L446.7 473.5 L448.2 473.5 L449.6 473.5 L451.0 467.0 L452.5 467.0 L453.9 467.0 L455.4 467.0 L456.8 467.0 L458.2 460.5 L459.7 460.5 L461.1 460.5 L462.6 460.5 L464.0 460.5 L465.4 460.5 L466.9 460.5 L468.3 460.5 L469.8 460.5 L471.2 460.5 L472.6 460.5 L474.1 460.5 L475.5 460.5 L477.0 460.5 L478.4 460.5 L479.8 460.5 L481.3 460.5 L482.7 467.0 L484.2 467.0 L485.6 467.0 L487.0 467.0 L488.5 467.0 L489.9 467.0 L491.4 467.0 L492.8 467.0 L494.2 467.0 L495.7 467.0 L497.1 467.0 L498.6 467.0 L500.0 467.0 L501.4 467.0 L502.9 467.0 L504.3 467.0 L505.8 467.0 L507.2 467.0 L508.6 467.0 L510.1 467.0 L511.5 467.0 L513.0 467.0 L514.4 467.0 L515.8 467.0 L517.3 467.0 L518.7 467.0 L520.2 467.0 L521.6 467.0 L523.0 467.0 L524.5 467.0 L525.9 467.0 L527.4 467.0 L528.8 467.0 L530.2 467.0 L531.7 467.0 L533.1 467.0 L534.6 467.0 L536.0 467.0 L537.4 467.0 L538.9 467.0 L540.3 467.0 L541.8 460.5 L543.2 460.5 L544.6 460.5 L546.1 460.5 L547.5 460.5 L549.0 460.5 L550.4 460.5 L551.8 473.5 L553.3 473.5 L554.7 473.5 L556.2 479.9 L557.6 479.9 L559.0 473.5 L560.5 473.5 L561.9 473.5 L563.4 460.5 L564.8 460.5 L566.2 460.5 L567.7 473.5 L569.1 473.5 L570.6 473.5 L572.0 467.0 L573.4 467.0 L574.9 467.0 L576.3 467.0 L577.8 467.0 L579.2 467.0 L580.6 467.0 L582.1 467.0 L583.5 467.0 L585.0 467.0 L586.4 467.0 L587.8 467.0 L589.3 467.0 L590.7 467.0 L592.2 467.0 L593.6 467.0 L595.0 467.0 L596.5 467.0 L597.9 467.0 L599.4 467.0 L600.8 467.0 L602.2 467.0 L603.7 467.0 L605.1 467.0 L606.6 467.0 L608.0 473.5 L609.4 473.5 L610.9 473.5 L612.3 473.5 L613.8 473.5 L615.2 473.5 L616.6 473.5 L618.1 473.5 L619.5 473.5 L621.0 473.5 L622.4 467.0 L623.8 467.0 L625.3 467.0 L626.7 467.0 L628.2 467.0 L629.6 467.0 L631.0 467.0 L632.5 467.0 L633.9 467.0 L635.4 467.0 L636.8 467.0 L638.2 467.0 L639.7 467.0 L641.1 467.0 L642.6 460.5 L644.0 460.5 L645.4 460.5 L646.9 460.5 L648.3 460.5 L649.8 460.5 L651.2 460.5 L652.6 460.5 L654.1 460.5 L655.5 460.5 L657.0 460.5 L658.4 467.0 L659.8 467.0 L661.3 467.0 L662.7 467.0 L664.2 467.0 L665.6 467.0 L666.2 467.0" fill="none" stroke="#ff780a" stroke-width="2.2" stroke-linejoin="round"/><path d="M666.1 234.7V506.3" stroke="rgba(204,204,220,0.35)" stroke-width="1" stroke-dasharray="3 3"/><circle cx="666.2" cy="459.5" r="5.5" fill="#8ab8ff" fill-opacity="0.45"/><circle cx="666.2" cy="459.5" r="3" fill="#8ab8ff"/><circle cx="666.4" cy="465.9" r="6.5" fill="#ff780a" fill-opacity="0.45"/><circle cx="666.4" cy="465.9" r="3.8" fill="#ff780a"/></svg>
<div class="t" style="left:19.68px;top:263.48px;font-size:16.60px;color:#bfc0cc;font-weight:normal;transform:scaleX(1.0013);transform-origin:0 0;-webkit-text-stroke:0.2px #bfc0cc;">80 °C</div>
<div class="t" style="left:19.55px;top:328.08px;font-size:16.60px;color:#bfc0cc;font-weight:normal;transform:scaleX(1.0045);transform-origin:0 0;-webkit-text-stroke:0.2px #bfc0cc;">70 °C</div>
<div class="t" style="left:19.55px;top:392.68px;font-size:16.60px;color:#bfc0cc;font-weight:normal;transform:scaleX(1.0043);transform-origin:0 0;-webkit-text-stroke:0.2px #bfc0cc;">60 °C</div>
<div class="t" style="left:19.74px;top:457.28px;font-size:16.60px;color:#bfc0cc;font-weight:normal;transform:scaleX(0.9999);transform-origin:0 0;-webkit-text-stroke:0.2px #bfc0cc;">50 °C</div>
<div class="t" style="left:50.87px;top:514.65px;font-size:16.30px;color:#bfc0cc;font-weight:normal;transform:scaleX(1.0603);transform-origin:0 0;-webkit-text-stroke:0.2px #bfc0cc;">04:00</div>
<div class="t" style="left:137.11px;top:514.65px;font-size:16.30px;color:#bfc0cc;font-weight:normal;transform:scaleX(1.0603);transform-origin:0 0;-webkit-text-stroke:0.2px #bfc0cc;">05:00</div>
<div class="t" style="left:223.35px;top:514.65px;font-size:16.30px;color:#bfc0cc;font-weight:normal;transform:scaleX(1.0603);transform-origin:0 0;-webkit-text-stroke:0.2px #bfc0cc;">06:00</div>
<div class="t" style="left:310.63px;top:514.65px;font-size:16.30px;color:#bfc0cc;font-weight:normal;transform:scaleX(1.0097);transform-origin:0 0;-webkit-text-stroke:0.2px #bfc0cc;">07:00</div>
<div class="t" style="left:395.83px;top:514.65px;font-size:16.30px;color:#bfc0cc;font-weight:normal;transform:scaleX(1.0603);transform-origin:0 0;-webkit-text-stroke:0.2px #bfc0cc;">08:00</div>
<div class="t" style="left:482.07px;top:514.65px;font-size:16.30px;color:#bfc0cc;font-weight:normal;transform:scaleX(1.0603);transform-origin:0 0;-webkit-text-stroke:0.2px #bfc0cc;">09:00</div>
<div class="t" style="left:569.20px;top:514.65px;font-size:16.30px;color:#bfc0cc;font-weight:normal;transform:scaleX(1.0023);transform-origin:0 0;-webkit-text-stroke:0.2px #bfc0cc;">10:00</div>
<div class="t" style="left:657.40px;top:514.65px;font-size:16.30px;color:#bfc0cc;font-weight:normal;transform:scaleX(0.9072);transform-origin:0 0;-webkit-text-stroke:0.2px #bfc0cc;">11:00</div>
<div class="t" style="left:741.99px;top:514.65px;font-size:16.30px;color:#bfc0cc;font-weight:normal;transform:scaleX(0.9869);transform-origin:0 0;-webkit-text-stroke:0.2px #bfc0cc;">12:00</div>
<div class="t" style="left:828.39px;top:514.65px;font-size:16.30px;color:#bfc0cc;font-weight:normal;transform:scaleX(0.9791);transform-origin:0 0;-webkit-text-stroke:0.2px #bfc0cc;">13:00</div>
<div class="t" style="left:914.26px;top:514.65px;font-size:16.30px;color:#bfc0cc;font-weight:normal;transform:scaleX(0.9971);transform-origin:0 0;-webkit-text-stroke:0.2px #bfc0cc;">14:00</div>
<div class="t" style="left:1000.93px;top:514.65px;font-size:16.30px;color:#bfc0cc;font-weight:normal;transform:scaleX(0.9766);transform-origin:0 0;-webkit-text-stroke:0.2px #bfc0cc;">15:00</div>
<svg class="r" style="left:0px;top:550px" width="1480" height="380" viewBox="0 550 1480 380"><path d="M76 634.5H1103.0" stroke="rgba(204,204,220,0.11)" stroke-width="1"/><path d="M76 700.8H1103.0" stroke="rgba(204,204,220,0.11)" stroke-width="1"/><path d="M76 767.1H1103.0" stroke="rgba(204,204,220,0.11)" stroke-width="1"/><path d="M76 833.4H1103.0" stroke="rgba(204,204,220,0.11)" stroke-width="1"/><path d="M80.9 615.0V890.4" stroke="rgba(204,204,220,0.11)" stroke-width="1"/><path d="M166.6 615.0V890.4" stroke="rgba(204,204,220,0.11)" stroke-width="1"/><path d="M252.3 615.0V890.4" stroke="rgba(204,204,220,0.11)" stroke-width="1"/><path d="M338.0 615.0V890.4" stroke="rgba(204,204,220,0.11)" stroke-width="1"/><path d="M423.7 615.0V890.4" stroke="rgba(204,204,220,0.11)" stroke-width="1"/><path d="M509.4 615.0V890.4" stroke="rgba(204,204,220,0.11)" stroke-width="1"/><path d="M595.1 615.0V890.4" stroke="rgba(204,204,220,0.11)" stroke-width="1"/><path d="M680.8 615.0V890.4" stroke="rgba(204,204,220,0.11)" stroke-width="1"/><path d="M766.5 615.0V890.4" stroke="rgba(204,204,220,0.11)" stroke-width="1"/><path d="M852.2 615.0V890.4" stroke="rgba(204,204,220,0.11)" stroke-width="1"/><path d="M937.9 615.0V890.4" stroke="rgba(204,204,220,0.11)" stroke-width="1"/><path d="M1023.6 615.0V890.4" stroke="rgba(204,204,220,0.11)" stroke-width="1"/><path d="M669.4 856.6 L672.0 853.3 L676.5 830.7 L680.0 826.8 L684.0 825.4 L689.3 824.1 L690.7 689.5 L692.2 821.5 L694.0 820.1 L695.0 806.9 L696.0 818.8 L697.5 820.8 L700.0 820.8 L703.0 821.3 L706.0 821.6 L709.0 821.6 L712.0 821.4 L715.0 821.6 L718.0 821.9 L721.0 822.1 L724.0 821.7 L727.0 821.9 L730.0 821.6 L733.0 821.4 L736.0 821.7 L739.0 821.5 L742.0 821.5 L745.0 821.5 L748.0 821.0 L751.0 821.4 L754.0 821.8 L757.0 821.2 L760.0 821.3 L763.0 821.5 L766.0 821.6 L769.0 821.7 L772.0 821.1 L775.0 821.4 L778.0 821.6 L781.0 821.4 L784.0 821.3 L787.0 820.8 L790.0 820.5 L793.0 820.7 L796.0 821.0 L799.0 820.6 L802.0 820.2 L805.0 820.7 L808.0 820.5 L811.0 820.2 L814.0 820.1 L817.0 820.4 L820.0 820.2 L823.0 820.0 L826.0 820.4 L829.0 820.3 L832.0 820.6 L835.0 821.1 L838.0 821.2 L841.0 821.3 L844.0 821.4 L847.0 821.2 L850.0 820.8 L853.0 820.4 L856.0 820.0 L859.0 819.6 L862.0 819.4 L865.0 819.7 L868.0 820.2 L871.0 820.1 L874.0 820.1 L877.0 820.0 L880.0 820.5 L883.0 820.8 L886.0 820.4 L889.0 820.4 L892.0 820.2 L895.0 820.7 L898.0 820.8 L901.0 820.4 L904.0 820.3 L907.0 819.9 L910.0 820.2 L913.0 820.3 L916.0 820.1 L919.0 820.2 L922.0 820.0 L925.0 820.0 L928.0 820.5 L931.0 820.9 L934.0 820.4 L937.0 820.8 L940.0 821.1 L943.0 821.2 L946.0 821.0 L949.0 820.6 L952.0 820.7 L955.0 820.7 L958.0 820.4 L961.0 820.7 L964.0 820.8 L967.0 820.7 L970.0 820.6 L973.0 821.0 L976.0 821.4 L979.0 821.7 L982.0 821.4 L985.0 821.1 L988.0 820.6 L991.0 820.4 L994.0 820.7 L997.0 820.4 L1000.0 820.0 L1003.0 820.2 L1006.0 820.8 L1009.0 820.9 L1012.0 821.1 L1015.0 821.4 L1018.0 821.7 L1021.0 822.0 L1024.0 821.5 L1027.0 821.9 L1030.0 821.7 L1033.0 821.9 L1036.0 822.1 L1039.0 821.6 L1042.0 821.7 L1045.0 821.9 L1048.0 821.9 L1051.0 821.6 L1054.0 821.5 L1057.0 821.1 L1060.0 821.1 L1063.0 821.1 L1066.0 820.8 L1069.0 820.9 L1072.0 820.7 L1075.0 820.7 L1078.0 821.1 L1081.0 821.4 L1084.0 821.1 L1087.0 820.8 L1090.0 820.4 L1093.0 820.2 L1096.0 820.2 L1099.0 820.6 L1102.0 820.3 L1102.0 886.2 L669.4 886.2 Z" fill="#73bf69" fill-opacity="0.10"/><path d="M669.4 836.1 L672.0 833.4 L678.0 828.8 L679.2 733.9 L680.8 637.2 L682.4 767.1 L683.8 821.5 L685.0 698.8 L686.3 816.8 L689.3 825.4 L700.0 825.4 L703.0 826.5 L706.0 826.7 L709.0 826.8 L712.0 826.3 L715.0 826.2 L718.0 826.0 L721.0 826.4 L724.0 826.3 L727.0 825.9 L730.0 825.9 L733.0 825.4 L736.0 825.1 L739.0 825.3 L742.0 825.8 L745.0 825.6 L748.0 825.9 L751.0 826.4 L754.0 826.1 L757.0 825.8 L760.0 825.4 L763.0 825.0 L766.0 825.4 L769.0 825.8 L772.0 826.2 L775.0 825.7 L778.0 826.1 L781.0 826.4 L784.0 826.8 L787.0 827.1 L790.0 827.4 L793.0 827.4 L796.0 827.5 L799.0 827.5 L802.0 827.0 L805.0 827.2 L808.0 826.7 L811.0 826.4 L814.0 826.3 L817.0 826.2 L820.0 825.9 L823.0 825.8 L826.0 826.0 L829.0 826.2 L832.0 826.4 L835.0 826.4 L838.0 825.9 L841.0 825.9 L844.0 826.3 L847.0 826.3 L850.0 825.9 L853.0 826.0 L856.0 825.8 L859.0 826.2 L862.0 826.5 L865.0 826.3 L868.0 826.7 L871.0 826.8 L874.0 826.8 L877.0 827.0 L880.0 827.3 L883.0 827.6 L886.0 827.0 L889.0 826.7 L892.0 826.2 L895.0 826.1 L898.0 825.7 L901.0 825.3 L904.0 825.3 L907.0 825.3 L910.0 825.3 L913.0 825.6 L916.0 825.8 L919.0 825.6 L922.0 825.9 L925.0 825.5 L928.0 825.5 L931.0 825.5 L934.0 825.2 L937.0 825.1 L940.0 825.5 L943.0 825.8 L946.0 826.3 L949.0 826.7 L952.0 826.1 L955.0 826.0 L958.0 825.5 L961.0 825.3 L964.0 825.5 L967.0 825.1 L970.0 824.8 L973.0 824.9 L976.0 825.4 L979.0 825.6 L982.0 825.9 L985.0 826.1 L988.0 826.4 L991.0 826.2 L994.0 825.7 L997.0 825.9 L1000.0 825.7 L1003.0 825.6 L1006.0 825.6 L1009.0 825.3 L1012.0 825.4 L1015.0 825.2 L1018.0 825.7 L1021.0 825.2 L1024.0 825.6 L1027.0 826.1 L1030.0 825.7 L1033.0 825.5 L1036.0 825.3 L1039.0 825.1 L1042.0 825.3 L1045.0 825.7 L1048.0 825.9 L1051.0 825.5 L1054.0 825.0 L1057.0 825.4 L1060.0 825.5 L1063.0 825.5 L1066.0 825.2 L1069.0 825.7 L1072.0 825.4 L1075.0 825.7 L1078.0 825.6 L1081.0 826.0 L1084.0 826.4 L1087.0 826.0 L1090.0 825.9 L1093.0 825.5 L1096.0 825.1 L1099.0 825.0 L1102.0 825.5 L1102.0 886.2 L669.4 886.2 Z" fill="#8ab8ff" fill-opacity="0.10"/><path d="M75.2 858.6 L78.2 858.3 L81.2 858.5 L84.2 858.2 L87.2 858.4 L90.2 858.7 L93.2 858.3 L96.2 858.2 L99.2 858.5 L102.2 858.1 L105.2 858.2 L108.2 858.6 L111.2 858.4 L114.2 858.2 L117.2 858.6 L120.2 858.6 L123.2 858.4 L126.2 858.5 L129.2 858.6 L132.2 858.2 L135.2 858.2 L138.2 858.1 L141.2 858.3 L144.2 858.4 L147.2 858.6 L150.2 858.2 L153.2 858.2 L156.2 858.4 L159.2 858.4 L162.2 858.1 L165.2 858.6 L168.2 858.3 L171.2 858.4 L174.2 858.4 L177.2 858.5 L180.2 858.4 L183.2 858.6 L186.2 858.5 L189.2 858.5 L192.2 858.5 L195.2 858.6 L198.2 858.2 L201.2 858.3 L204.2 858.2 L207.2 858.4 L210.2 858.2 L213.2 858.2 L216.2 858.5 L219.2 858.2 L222.2 858.6 L225.2 858.2 L228.2 858.2 L231.2 858.5 L234.2 858.4 L237.2 858.6 L240.2 858.2 L243.2 858.3 L246.2 858.5 L249.2 858.4 L252.2 858.6 L255.2 858.2 L258.2 858.2 L261.2 858.4 L264.2 858.2 L267.2 858.4 L270.2 858.3 L273.2 858.3 L276.2 858.6 L279.2 858.3 L282.2 858.4 L285.2 858.4 L288.2 858.2 L291.2 858.6 L294.2 858.6 L297.2 858.6 L300.2 858.3 L303.2 858.4 L306.2 858.4 L309.2 858.6 L312.2 858.5 L315.2 858.4 L318.2 858.3 L321.2 858.2 L324.2 858.7 L327.2 858.6 L330.2 858.6 L333.2 858.5 L336.2 858.5 L339.2 858.5 L342.2 858.2 L345.2 858.4 L348.2 858.2 L351.2 858.3 L354.2 858.3 L357.2 858.5 L360.2 858.4 L363.2 858.6 L366.2 858.1 L369.2 858.5 L372.2 858.6 L375.2 858.6 L378.2 858.3 L381.2 858.3 L384.2 858.3 L387.2 858.4 L390.2 858.4 L393.2 858.6 L396.2 858.5 L399.2 858.2 L402.2 858.4 L405.2 858.5 L408.2 858.3 L411.2 858.6 L414.2 858.4 L417.2 858.2 L420.2 858.3 L423.2 858.3 L426.2 858.3 L429.2 858.5 L432.2 858.5 L435.2 858.2 L438.2 858.1 L441.2 858.5 L444.2 858.5 L447.2 858.4 L450.2 858.5 L453.2 858.3 L456.2 858.6 L459.2 858.3 L462.2 858.5 L465.2 858.3 L468.2 858.2 L471.2 858.5 L474.2 858.6 L477.2 858.6 L480.2 858.5 L483.2 858.2 L486.2 858.4 L489.2 858.5 L492.2 858.5 L495.2 858.6 L498.2 858.6 L501.2 858.2 L504.2 858.7 L507.2 858.6 L510.2 858.3 L513.2 858.7 L516.2 858.6 L519.2 858.4 L522.2 858.5 L525.2 858.2 L528.2 858.4 L531.2 858.6 L534.2 858.4 L537.2 858.2 L540.2 858.2 L543.2 858.7 L546.2 858.6 L549.2 858.3 L552.2 858.6 L555.2 858.2 L558.2 858.3 L561.2 858.2 L564.2 858.5 L567.2 858.5 L570.2 858.2 L573.2 858.6 L576.2 858.3 L579.2 858.5 L582.2 858.6 L585.2 858.3 L588.2 858.6 L591.2 858.2 L594.2 858.4 L597.2 858.3 L600.2 858.6 L603.2 858.5 L606.2 858.5 L609.2 858.3 L612.2 858.3 L615.2 858.6 L618.2 858.2 L621.2 858.3 L624.2 858.2 L627.2 858.4 L630.2 858.1 L633.2 858.2 L636.2 858.2 L639.2 858.5 L642.2 858.3 L645.2 858.3 L648.2 858.2 L651.2 858.2 L654.2 858.1 L657.2 858.2 L660.2 858.2 L663.2 858.6 L666.2 858.6 L669.2 858.2 L669.2 886.2 L75.2 886.2 Z" fill="#ff780a" fill-opacity="0.10"/><path d="M75.2 856.6 L78.2 856.7 L81.2 856.6 L84.2 856.7 L87.2 856.9 L90.2 856.8 L93.2 857.0 L96.2 856.9 L99.2 857.0 L102.2 856.6 L105.2 856.7 L108.2 856.8 L111.2 856.9 L114.2 856.8 L117.2 856.6 L120.2 856.5 L123.2 856.7 L126.2 856.7 L129.2 857.0 L132.2 856.9 L135.2 856.9 L138.2 856.5 L141.2 856.6 L144.2 856.6 L147.2 856.8 L150.2 856.9 L153.2 856.5 L156.2 856.8 L159.2 856.8 L162.2 856.8 L165.2 857.0 L168.2 856.5 L171.2 856.7 L174.2 856.6 L177.2 856.7 L180.2 856.7 L183.2 856.9 L186.2 856.5 L189.2 856.7 L192.2 856.9 L195.2 856.6 L198.2 856.8 L201.2 856.6 L204.2 856.5 L207.2 856.5 L210.2 856.7 L213.2 856.7 L216.2 856.9 L219.2 856.9 L222.2 856.6 L225.2 856.7 L228.2 857.0 L231.2 856.8 L234.2 856.9 L237.2 856.8 L240.2 856.5 L243.2 856.7 L246.2 856.5 L249.2 856.6 L252.2 856.9 L255.2 856.6 L258.2 856.7 L261.2 856.7 L264.2 856.8 L267.2 856.9 L270.2 857.0 L273.2 856.5 L276.2 856.7 L279.2 856.6 L282.2 856.9 L285.2 856.5 L288.2 856.9 L291.2 857.0 L294.2 856.8 L297.2 856.5 L300.2 856.9 L303.2 856.8 L306.2 856.9 L309.2 856.9 L312.2 856.6 L315.2 857.0 L318.2 856.5 L321.2 856.6 L324.2 856.8 L327.2 856.6 L330.2 856.6 L333.2 856.6 L336.2 857.0 L339.2 856.8 L342.2 856.8 L345.2 856.7 L348.2 857.0 L351.2 856.7 L354.2 856.5 L357.2 856.6 L360.2 856.7 L363.2 856.6 L366.2 856.8 L369.2 856.5 L372.2 857.0 L375.2 856.6 L378.2 856.8 L381.2 857.0 L384.2 856.8 L387.2 856.8 L390.2 856.9 L393.2 856.8 L396.2 856.6 L399.2 856.6 L402.2 856.9 L405.2 856.7 L408.2 856.5 L411.2 856.7 L414.2 856.6 L417.2 856.6 L420.2 856.6 L423.2 856.5 L426.2 856.6 L429.2 856.5 L432.2 856.7 L435.2 856.5 L438.2 857.0 L441.2 856.8 L444.2 856.9 L447.2 857.0 L450.2 856.5 L453.2 856.8 L456.2 856.5 L459.2 856.9 L462.2 856.7 L465.2 856.9 L468.2 856.8 L471.2 856.6 L474.2 856.6 L477.2 856.7 L480.2 856.8 L483.2 856.8 L486.2 856.7 L489.2 856.9 L492.2 856.9 L495.2 856.5 L498.2 856.6 L501.2 856.6 L504.2 856.7 L507.2 856.7 L510.2 856.9 L513.2 856.7 L516.2 856.8 L519.2 856.5 L522.2 856.9 L525.2 856.6 L528.2 857.0 L531.2 856.8 L534.2 856.9 L537.2 856.6 L540.2 856.5 L543.2 856.7 L546.2 856.5 L549.2 856.6 L552.2 857.0 L555.2 856.7 L558.2 856.8 L561.2 856.8 L564.2 856.8 L567.2 856.7 L570.2 857.0 L573.2 856.7 L576.2 856.9 L579.2 857.0 L582.2 856.7 L585.2 856.7 L588.2 856.6 L591.2 832.7 L594.2 829.5 L597.2 828.0 L600.2 828.1 L603.2 854.8 L606.2 856.4 L609.2 856.9 L612.2 856.7 L615.2 856.6 L618.2 856.5 L621.2 856.9 L624.2 856.5 L627.2 856.5 L630.2 856.8 L633.2 856.5 L636.2 857.0 L639.2 856.7 L642.2 856.6 L645.2 856.9 L648.2 856.7 L651.2 856.9 L654.2 856.7 L657.2 856.6 L660.2 856.8 L663.2 856.8 L666.2 856.7 L669.2 856.8 L669.2 886.2 L75.2 886.2 Z" fill="#f2cc0c" fill-opacity="0.10"/><path d="M669.4 856.6 L672.0 853.3 L676.5 830.7 L680.0 826.8 L684.0 825.4 L689.3 824.1 L690.7 689.5 L692.2 821.5 L694.0 820.1 L695.0 806.9 L696.0 818.8 L697.5 820.8 L700.0 820.8 L703.0 821.3 L706.0 821.6 L709.0 821.6 L712.0 821.4 L715.0 821.6 L718.0 821.9 L721.0 822.1 L724.0 821.7 L727.0 821.9 L730.0 821.6 L733.0 821.4 L736.0 821.7 L739.0 821.5 L742.0 821.5 L745.0 821.5 L748.0 821.0 L751.0 821.4 L754.0 821.8 L757.0 821.2 L760.0 821.3 L763.0 821.5 L766.0 821.6 L769.0 821.7 L772.0 821.1 L775.0 821.4 L778.0 821.6 L781.0 821.4 L784.0 821.3 L787.0 820.8 L790.0 820.5 L793.0 820.7 L796.0 821.0 L799.0 820.6 L802.0 820.2 L805.0 820.7 L808.0 820.5 L811.0 820.2 L814.0 820.1 L817.0 820.4 L820.0 820.2 L823.0 820.0 L826.0 820.4 L829.0 820.3 L832.0 820.6 L835.0 821.1 L838.0 821.2 L841.0 821.3 L844.0 821.4 L847.0 821.2 L850.0 820.8 L853.0 820.4 L856.0 820.0 L859.0 819.6 L862.0 819.4 L865.0 819.7 L868.0 820.2 L871.0 820.1 L874.0 820.1 L877.0 820.0 L880.0 820.5 L883.0 820.8 L886.0 820.4 L889.0 820.4 L892.0 820.2 L895.0 820.7 L898.0 820.8 L901.0 820.4 L904.0 820.3 L907.0 819.9 L910.0 820.2 L913.0 820.3 L916.0 820.1 L919.0 820.2 L922.0 820.0 L925.0 820.0 L928.0 820.5 L931.0 820.9 L934.0 820.4 L937.0 820.8 L940.0 821.1 L943.0 821.2 L946.0 821.0 L949.0 820.6 L952.0 820.7 L955.0 820.7 L958.0 820.4 L961.0 820.7 L964.0 820.8 L967.0 820.7 L970.0 820.6 L973.0 821.0 L976.0 821.4 L979.0 821.7 L982.0 821.4 L985.0 821.1 L988.0 820.6 L991.0 820.4 L994.0 820.7 L997.0 820.4 L1000.0 820.0 L1003.0 820.2 L1006.0 820.8 L1009.0 820.9 L1012.0 821.1 L1015.0 821.4 L1018.0 821.7 L1021.0 822.0 L1024.0 821.5 L1027.0 821.9 L1030.0 821.7 L1033.0 821.9 L1036.0 822.1 L1039.0 821.6 L1042.0 821.7 L1045.0 821.9 L1048.0 821.9 L1051.0 821.6 L1054.0 821.5 L1057.0 821.1 L1060.0 821.1 L1063.0 821.1 L1066.0 820.8 L1069.0 820.9 L1072.0 820.7 L1075.0 820.7 L1078.0 821.1 L1081.0 821.4 L1084.0 821.1 L1087.0 820.8 L1090.0 820.4 L1093.0 820.2 L1096.0 820.2 L1099.0 820.6 L1102.0 820.3" fill="none" stroke="#73bf69" stroke-width="2.2" stroke-linejoin="round"/><path d="M75.2 856.6 L78.2 856.7 L81.2 856.6 L84.2 856.7 L87.2 856.9 L90.2 856.8 L93.2 857.0 L96.2 856.9 L99.2 857.0 L102.2 856.6 L105.2 856.7 L108.2 856.8 L111.2 856.9 L114.2 856.8 L117.2 856.6 L120.2 856.5 L123.2 856.7 L126.2 856.7 L129.2 857.0 L132.2 856.9 L135.2 856.9 L138.2 856.5 L141.2 856.6 L144.2 856.6 L147.2 856.8 L150.2 856.9 L153.2 856.5 L156.2 856.8 L159.2 856.8 L162.2 856.8 L165.2 857.0 L168.2 856.5 L171.2 856.7 L174.2 856.6 L177.2 856.7 L180.2 856.7 L183.2 856.9 L186.2 856.5 L189.2 856.7 L192.2 856.9 L195.2 856.6 L198.2 856.8 L201.2 856.6 L204.2 856.5 L207.2 856.5 L210.2 856.7 L213.2 856.7 L216.2 856.9 L219.2 856.9 L222.2 856.6 L225.2 856.7 L228.2 857.0 L231.2 856.8 L234.2 856.9 L237.2 856.8 L240.2 856.5 L243.2 856.7 L246.2 856.5 L249.2 856.6 L252.2 856.9 L255.2 856.6 L258.2 856.7 L261.2 856.7 L264.2 856.8 L267.2 856.9 L270.2 857.0 L273.2 856.5 L276.2 856.7 L279.2 856.6 L282.2 856.9 L285.2 856.5 L288.2 856.9 L291.2 857.0 L294.2 856.8 L297.2 856.5 L300.2 856.9 L303.2 856.8 L306.2 856.9 L309.2 856.9 L312.2 856.6 L315.2 857.0 L318.2 856.5 L321.2 856.6 L324.2 856.8 L327.2 856.6 L330.2 856.6 L333.2 856.6 L336.2 857.0 L339.2 856.8 L342.2 856.8 L345.2 856.7 L348.2 857.0 L351.2 856.7 L354.2 856.5 L357.2 856.6 L360.2 856.7 L363.2 856.6 L366.2 856.8 L369.2 856.5 L372.2 857.0 L375.2 856.6 L378.2 856.8 L381.2 857.0 L384.2 856.8 L387.2 856.8 L390.2 856.9 L393.2 856.8 L396.2 856.6 L399.2 856.6 L402.2 856.9 L405.2 856.7 L408.2 856.5 L411.2 856.7 L414.2 856.6 L417.2 856.6 L420.2 856.6 L423.2 856.5 L426.2 856.6 L429.2 856.5 L432.2 856.7 L435.2 856.5 L438.2 857.0 L441.2 856.8 L444.2 856.9 L447.2 857.0 L450.2 856.5 L453.2 856.8 L456.2 856.5 L459.2 856.9 L462.2 856.7 L465.2 856.9 L468.2 856.8 L471.2 856.6 L474.2 856.6 L477.2 856.7 L480.2 856.8 L483.2 856.8 L486.2 856.7 L489.2 856.9 L492.2 856.9 L495.2 856.5 L498.2 856.6 L501.2 856.6 L504.2 856.7 L507.2 856.7 L510.2 856.9 L513.2 856.7 L516.2 856.8 L519.2 856.5 L522.2 856.9 L525.2 856.6 L528.2 857.0 L531.2 856.8 L534.2 856.9 L537.2 856.6 L540.2 856.5 L543.2 856.7 L546.2 856.5 L549.2 856.6 L552.2 857.0 L555.2 856.7 L558.2 856.8 L561.2 856.8 L564.2 856.8 L567.2 856.7 L570.2 857.0 L573.2 856.7 L576.2 856.9 L579.2 857.0 L582.2 856.7 L585.2 856.7 L588.2 856.6 L591.2 832.7 L594.2 829.5 L597.2 828.0 L600.2 828.1 L603.2 854.8 L606.2 856.4 L609.2 856.9 L612.2 856.7 L615.2 856.6 L618.2 856.5 L621.2 856.9 L624.2 856.5 L627.2 856.5 L630.2 856.8 L633.2 856.5 L636.2 857.0 L639.2 856.7 L642.2 856.6 L645.2 856.9 L648.2 856.7 L651.2 856.9 L654.2 856.7 L657.2 856.6 L660.2 856.8 L663.2 856.8 L666.2 856.7 L669.2 856.8" fill="none" stroke="#f2cc0c" stroke-width="2.2" stroke-linejoin="round"/><path d="M669.4 836.1 L672.0 833.4 L678.0 828.8 L679.2 733.9 L680.8 637.2 L682.4 767.1 L683.8 821.5 L685.0 698.8 L686.3 816.8 L689.3 825.4 L700.0 825.4 L703.0 826.5 L706.0 826.7 L709.0 826.8 L712.0 826.3 L715.0 826.2 L718.0 826.0 L721.0 826.4 L724.0 826.3 L727.0 825.9 L730.0 825.9 L733.0 825.4 L736.0 825.1 L739.0 825.3 L742.0 825.8 L745.0 825.6 L748.0 825.9 L751.0 826.4 L754.0 826.1 L757.0 825.8 L760.0 825.4 L763.0 825.0 L766.0 825.4 L769.0 825.8 L772.0 826.2 L775.0 825.7 L778.0 826.1 L781.0 826.4 L784.0 826.8 L787.0 827.1 L790.0 827.4 L793.0 827.4 L796.0 827.5 L799.0 827.5 L802.0 827.0 L805.0 827.2 L808.0 826.7 L811.0 826.4 L814.0 826.3 L817.0 826.2 L820.0 825.9 L823.0 825.8 L826.0 826.0 L829.0 826.2 L832.0 826.4 L835.0 826.4 L838.0 825.9 L841.0 825.9 L844.0 826.3 L847.0 826.3 L850.0 825.9 L853.0 826.0 L856.0 825.8 L859.0 826.2 L862.0 826.5 L865.0 826.3 L868.0 826.7 L871.0 826.8 L874.0 826.8 L877.0 827.0 L880.0 827.3 L883.0 827.6 L886.0 827.0 L889.0 826.7 L892.0 826.2 L895.0 826.1 L898.0 825.7 L901.0 825.3 L904.0 825.3 L907.0 825.3 L910.0 825.3 L913.0 825.6 L916.0 825.8 L919.0 825.6 L922.0 825.9 L925.0 825.5 L928.0 825.5 L931.0 825.5 L934.0 825.2 L937.0 825.1 L940.0 825.5 L943.0 825.8 L946.0 826.3 L949.0 826.7 L952.0 826.1 L955.0 826.0 L958.0 825.5 L961.0 825.3 L964.0 825.5 L967.0 825.1 L970.0 824.8 L973.0 824.9 L976.0 825.4 L979.0 825.6 L982.0 825.9 L985.0 826.1 L988.0 826.4 L991.0 826.2 L994.0 825.7 L997.0 825.9 L1000.0 825.7 L1003.0 825.6 L1006.0 825.6 L1009.0 825.3 L1012.0 825.4 L1015.0 825.2 L1018.0 825.7 L1021.0 825.2 L1024.0 825.6 L1027.0 826.1 L1030.0 825.7 L1033.0 825.5 L1036.0 825.3 L1039.0 825.1 L1042.0 825.3 L1045.0 825.7 L1048.0 825.9 L1051.0 825.5 L1054.0 825.0 L1057.0 825.4 L1060.0 825.5 L1063.0 825.5 L1066.0 825.2 L1069.0 825.7 L1072.0 825.4 L1075.0 825.7 L1078.0 825.6 L1081.0 826.0 L1084.0 826.4 L1087.0 826.0 L1090.0 825.9 L1093.0 825.5 L1096.0 825.1 L1099.0 825.0 L1102.0 825.5" fill="none" stroke="#8ab8ff" stroke-width="2.2" stroke-linejoin="round"/><path d="M75.2 858.6 L78.2 858.3 L81.2 858.5 L84.2 858.2 L87.2 858.4 L90.2 858.7 L93.2 858.3 L96.2 858.2 L99.2 858.5 L102.2 858.1 L105.2 858.2 L108.2 858.6 L111.2 858.4 L114.2 858.2 L117.2 858.6 L120.2 858.6 L123.2 858.4 L126.2 858.5 L129.2 858.6 L132.2 858.2 L135.2 858.2 L138.2 858.1 L141.2 858.3 L144.2 858.4 L147.2 858.6 L150.2 858.2 L153.2 858.2 L156.2 858.4 L159.2 858.4 L162.2 858.1 L165.2 858.6 L168.2 858.3 L171.2 858.4 L174.2 858.4 L177.2 858.5 L180.2 858.4 L183.2 858.6 L186.2 858.5 L189.2 858.5 L192.2 858.5 L195.2 858.6 L198.2 858.2 L201.2 858.3 L204.2 858.2 L207.2 858.4 L210.2 858.2 L213.2 858.2 L216.2 858.5 L219.2 858.2 L222.2 858.6 L225.2 858.2 L228.2 858.2 L231.2 858.5 L234.2 858.4 L237.2 858.6 L240.2 858.2 L243.2 858.3 L246.2 858.5 L249.2 858.4 L252.2 858.6 L255.2 858.2 L258.2 858.2 L261.2 858.4 L264.2 858.2 L267.2 858.4 L270.2 858.3 L273.2 858.3 L276.2 858.6 L279.2 858.3 L282.2 858.4 L285.2 858.4 L288.2 858.2 L291.2 858.6 L294.2 858.6 L297.2 858.6 L300.2 858.3 L303.2 858.4 L306.2 858.4 L309.2 858.6 L312.2 858.5 L315.2 858.4 L318.2 858.3 L321.2 858.2 L324.2 858.7 L327.2 858.6 L330.2 858.6 L333.2 858.5 L336.2 858.5 L339.2 858.5 L342.2 858.2 L345.2 858.4 L348.2 858.2 L351.2 858.3 L354.2 858.3 L357.2 858.5 L360.2 858.4 L363.2 858.6 L366.2 858.1 L369.2 858.5 L372.2 858.6 L375.2 858.6 L378.2 858.3 L381.2 858.3 L384.2 858.3 L387.2 858.4 L390.2 858.4 L393.2 858.6 L396.2 858.5 L399.2 858.2 L402.2 858.4 L405.2 858.5 L408.2 858.3 L411.2 858.6 L414.2 858.4 L417.2 858.2 L420.2 858.3 L423.2 858.3 L426.2 858.3 L429.2 858.5 L432.2 858.5 L435.2 858.2 L438.2 858.1 L441.2 858.5 L444.2 858.5 L447.2 858.4 L450.2 858.5 L453.2 858.3 L456.2 858.6 L459.2 858.3 L462.2 858.5 L465.2 858.3 L468.2 858.2 L471.2 858.5 L474.2 858.6 L477.2 858.6 L480.2 858.5 L483.2 858.2 L486.2 858.4 L489.2 858.5 L492.2 858.5 L495.2 858.6 L498.2 858.6 L501.2 858.2 L504.2 858.7 L507.2 858.6 L510.2 858.3 L513.2 858.7 L516.2 858.6 L519.2 858.4 L522.2 858.5 L525.2 858.2 L528.2 858.4 L531.2 858.6 L534.2 858.4 L537.2 858.2 L540.2 858.2 L543.2 858.7 L546.2 858.6 L549.2 858.3 L552.2 858.6 L555.2 858.2 L558.2 858.3 L561.2 858.2 L564.2 858.5 L567.2 858.5 L570.2 858.2 L573.2 858.6 L576.2 858.3 L579.2 858.5 L582.2 858.6 L585.2 858.3 L588.2 858.6 L591.2 858.2 L594.2 858.4 L597.2 858.3 L600.2 858.6 L603.2 858.5 L606.2 858.5 L609.2 858.3 L612.2 858.3 L615.2 858.6 L618.2 858.2 L621.2 858.3 L624.2 858.2 L627.2 858.4 L630.2 858.1 L633.2 858.2 L636.2 858.2 L639.2 858.5 L642.2 858.3 L645.2 858.3 L648.2 858.2 L651.2 858.2 L654.2 858.1 L657.2 858.2 L660.2 858.2 L663.2 858.6 L666.2 858.6 L669.2 858.2" fill="none" stroke="#ff780a" stroke-width="2.2" stroke-linejoin="round"/></svg>
<div class="t" style="left:20.62px;top:624.78px;font-size:16.60px;color:#bfc0cc;font-weight:normal;transform:scaleX(0.9950);transform-origin:0 0;-webkit-text-stroke:0.2px #bfc0cc;">400 W</div>
<div class="t" style="left:20.37px;top:691.08px;font-size:16.60px;color:#bfc0cc;font-weight:normal;transform:scaleX(1.0003);transform-origin:0 0;-webkit-text-stroke:0.2px #bfc0cc;">300 W</div>
<div class="t" style="left:20.16px;top:757.38px;font-size:16.60px;color:#bfc0cc;font-weight:normal;transform:scaleX(1.0046);transform-origin:0 0;-webkit-text-stroke:0.2px #bfc0cc;">200 W</div>
<div class="t" style="left:23.21px;top:823.68px;font-size:16.60px;color:#bfc0cc;font-weight:normal;transform:scaleX(0.9409);transform-origin:0 0;-webkit-text-stroke:0.2px #bfc0cc;">100 W</div>
<div class="t" style="left:58.37px;top:894.65px;font-size:16.30px;color:#bfc0cc;font-weight:normal;transform:scaleX(1.0603);transform-origin:0 0;-webkit-text-stroke:0.2px #bfc0cc;">04:00</div>
<div class="t" style="left:144.07px;top:894.65px;font-size:16.30px;color:#bfc0cc;font-weight:normal;transform:scaleX(1.0603);transform-origin:0 0;-webkit-text-stroke:0.2px #bfc0cc;">05:00</div>
<div class="t" style="left:229.77px;top:894.65px;font-size:16.30px;color:#bfc0cc;font-weight:normal;transform:scaleX(1.0603);transform-origin:0 0;-webkit-text-stroke:0.2px #bfc0cc;">06:00</div>
<div class="t" style="left:316.51px;top:894.65px;font-size:16.30px;color:#bfc0cc;font-weight:normal;transform:scaleX(1.0097);transform-origin:0 0;-webkit-text-stroke:0.2px #bfc0cc;">07:00</div>
<div class="t" style="left:401.17px;top:894.65px;font-size:16.30px;color:#bfc0cc;font-weight:normal;transform:scaleX(1.0603);transform-origin:0 0;-webkit-text-stroke:0.2px #bfc0cc;">08:00</div>
<div class="t" style="left:486.87px;top:894.65px;font-size:16.30px;color:#bfc0cc;font-weight:normal;transform:scaleX(1.0603);transform-origin:0 0;-webkit-text-stroke:0.2px #bfc0cc;">09:00</div>
<div class="t" style="left:573.46px;top:894.65px;font-size:16.30px;color:#bfc0cc;font-weight:normal;transform:scaleX(1.0023);transform-origin:0 0;-webkit-text-stroke:0.2px #bfc0cc;">10:00</div>
<div class="t" style="left:661.12px;top:894.65px;font-size:16.30px;color:#bfc0cc;font-weight:normal;transform:scaleX(0.9072);transform-origin:0 0;-webkit-text-stroke:0.2px #bfc0cc;">11:00</div>
<div class="t" style="left:745.17px;top:894.65px;font-size:16.30px;color:#bfc0cc;font-weight:normal;transform:scaleX(0.9869);transform-origin:0 0;-webkit-text-stroke:0.2px #bfc0cc;">12:00</div>
<div class="t" style="left:831.03px;top:894.65px;font-size:16.30px;color:#bfc0cc;font-weight:normal;transform:scaleX(0.9791);transform-origin:0 0;-webkit-text-stroke:0.2px #bfc0cc;">13:00</div>
<div class="t" style="left:916.36px;top:894.65px;font-size:16.30px;color:#bfc0cc;font-weight:normal;transform:scaleX(0.9971);transform-origin:0 0;-webkit-text-stroke:0.2px #bfc0cc;">14:00</div>
<div class="t" style="left:1002.49px;top:894.65px;font-size:16.30px;color:#bfc0cc;font-weight:normal;transform:scaleX(0.9766);transform-origin:0 0;-webkit-text-stroke:0.2px #bfc0cc;">15:00</div>
<div class="t" style="left:1150.46px;top:228.47px;font-size:15.50px;color:#6e9fff;font-weight:normal;transform:scaleX(1.0511);transform-origin:0 0;-webkit-text-stroke:0.3px #6e9fff;">Name</div>
<div class="t" style="left:1244.21px;top:228.47px;font-size:15.50px;color:#6e9fff;font-weight:normal;transform:scaleX(1.0906);transform-origin:0 0;-webkit-text-stroke:0.3px #6e9fff;">Mean</div>
<div class="t" style="left:1329.20px;top:228.47px;font-size:15.50px;color:#6e9fff;font-weight:normal;transform:scaleX(1.1804);transform-origin:0 0;-webkit-text-stroke:0.3px #6e9fff;">Last *</div>
<div class="t" style="left:1421.76px;top:228.47px;font-size:15.50px;color:#6e9fff;font-weight:normal;transform:scaleX(1.1313);transform-origin:0 0;-webkit-text-stroke:0.3px #6e9fff;">Max</div>
<div class="r" style="left:1114.00px;top:253.00px;width:351.20px;height:1.00px;background:rgba(204,204,220,0.12);"></div>
<div class="r" style="left:1114.00px;top:282.70px;width:351.20px;height:1.00px;background:rgba(204,204,220,0.12);"></div>
<div class="r" style="left:1114.00px;top:312.40px;width:351.20px;height:1.00px;background:rgba(204,204,220,0.12);"></div>
<div class="r" style="left:1114.00px;top:342.10px;width:351.20px;height:1.00px;background:rgba(204,204,220,0.12);"></div>
<div class="r" style="left:1114.00px;top:371.80px;width:351.20px;height:1.00px;background:rgba(204,204,220,0.12);"></div>
<div class="r" style="left:1123.80px;top:265.60px;width:17.80px;height:5.20px;background:#73bf69;border-radius:3px;"></div>
<div class="t" style="left:1150.61px;top:259.07px;font-size:15.50px;color:#ccccdc;font-weight:normal;transform:scaleX(1.0082);transform-origin:0 0;-webkit-text-stroke:0.2px #ccccdc;">GPU 0</div>
<div class="t" style="left:1231.67px;top:259.07px;font-size:15.50px;color:#ccccdc;font-weight:normal;transform:scaleX(1.0479);transform-origin:0 0;-webkit-text-stroke:0.2px #ccccdc;">73.3 °C</div>
<div class="t" style="left:1335.98px;top:259.07px;font-size:15.50px;color:#ccccdc;font-weight:normal;transform:scaleX(1.0358);transform-origin:0 0;-webkit-text-stroke:0.2px #ccccdc;">74 °C</div>
<div class="t" style="left:1416.53px;top:259.07px;font-size:15.50px;color:#ccccdc;font-weight:normal;transform:scaleX(0.9953);transform-origin:0 0;-webkit-text-stroke:0.2px #ccccdc;">81 °C</div>
<div class="r" style="left:1123.80px;top:295.30px;width:17.80px;height:5.20px;background:#f2cc0c;border-radius:3px;"></div>
<div class="t" style="left:1150.61px;top:288.77px;font-size:15.50px;color:#ccccdc;font-weight:normal;transform:scaleX(1.0082);transform-origin:0 0;-webkit-text-stroke:0.2px #ccccdc;">GPU 0</div>
<div class="t" style="left:1233.98px;top:288.77px;font-size:15.50px;color:#ccccdc;font-weight:normal;transform:scaleX(1.0029);transform-origin:0 0;-webkit-text-stroke:0.2px #ccccdc;">51.2 °C</div>
<div class="t" style="left:1334.94px;top:288.77px;font-size:15.50px;color:#ccccdc;font-weight:normal;transform:scaleX(1.0629);transform-origin:0 0;-webkit-text-stroke:0.2px #ccccdc;">50 °C</div>
<div class="t" style="left:1413.56px;top:288.77px;font-size:15.50px;color:#ccccdc;font-weight:normal;transform:scaleX(1.0729);transform-origin:0 0;-webkit-text-stroke:0.2px #ccccdc;">66 °C</div>
<div class="r" style="left:1123.80px;top:325.00px;width:17.80px;height:5.20px;background:#8ab8ff;border-radius:3px;"></div>
<div class="t" style="left:1150.61px;top:318.47px;font-size:15.50px;color:#ccccdc;font-weight:normal;transform:scaleX(1.0082);transform-origin:0 0;-webkit-text-stroke:0.2px #ccccdc;">GPU 0</div>
<div class="t" style="left:1235.73px;top:318.47px;font-size:15.50px;color:#ccccdc;font-weight:normal;transform:scaleX(0.9687);transform-origin:0 0;-webkit-text-stroke:0.2px #ccccdc;">72.1 °C</div>
<div class="t" style="left:1335.98px;top:318.47px;font-size:15.50px;color:#ccccdc;font-weight:normal;transform:scaleX(1.0358);transform-origin:0 0;-webkit-text-stroke:0.2px #ccccdc;">73 °C</div>
<div class="t" style="left:1413.68px;top:318.47px;font-size:15.50px;color:#ccccdc;font-weight:normal;transform:scaleX(1.0697);transform-origin:0 0;-webkit-text-stroke:0.2px #ccccdc;">82 °C</div>
<div class="r" style="left:1123.80px;top:354.70px;width:17.80px;height:5.20px;background:#ff780a;border-radius:3px;"></div>
<div class="t" style="left:1150.61px;top:348.17px;font-size:15.50px;color:#ccccdc;font-weight:normal;transform:scaleX(1.0082);transform-origin:0 0;-webkit-text-stroke:0.2px #ccccdc;">GPU 0</div>
<div class="t" style="left:1233.98px;top:348.17px;font-size:15.50px;color:#ccccdc;font-weight:normal;transform:scaleX(1.0029);transform-origin:0 0;-webkit-text-stroke:0.2px #ccccdc;">51.2 °C</div>
<div class="t" style="left:1334.94px;top:348.17px;font-size:15.50px;color:#ccccdc;font-weight:normal;transform:scaleX(1.0629);transform-origin:0 0;-webkit-text-stroke:0.2px #ccccdc;">50 °C</div>
<div class="t" style="left:1414.25px;top:348.17px;font-size:15.50px;color:#ccccdc;font-weight:normal;transform:scaleX(1.0549);transform-origin:0 0;-webkit-text-stroke:0.2px #ccccdc;">53 °C</div>
<div class="t" style="left:1150.46px;top:608.47px;font-size:15.50px;color:#6e9fff;font-weight:normal;transform:scaleX(1.0511);transform-origin:0 0;-webkit-text-stroke:0.3px #6e9fff;">Name</div>
<div class="t" style="left:1244.21px;top:608.47px;font-size:15.50px;color:#6e9fff;font-weight:normal;transform:scaleX(1.0906);transform-origin:0 0;-webkit-text-stroke:0.3px #6e9fff;">Mean</div>
<div class="t" style="left:1329.20px;top:608.47px;font-size:15.50px;color:#6e9fff;font-weight:normal;transform:scaleX(1.1804);transform-origin:0 0;-webkit-text-stroke:0.3px #6e9fff;">Last *</div>
<div class="t" style="left:1421.76px;top:608.47px;font-size:15.50px;color:#6e9fff;font-weight:normal;transform:scaleX(1.1313);transform-origin:0 0;-webkit-text-stroke:0.3px #6e9fff;">Max</div>
<div class="r" style="left:1114.00px;top:633.00px;width:351.20px;height:1.00px;background:rgba(204,204,220,0.12);"></div>
<div class="r" style="left:1114.00px;top:662.70px;width:351.20px;height:1.00px;background:rgba(204,204,220,0.12);"></div>
<div class="r" style="left:1114.00px;top:692.40px;width:351.20px;height:1.00px;background:rgba(204,204,220,0.12);"></div>
<div class="r" style="left:1114.00px;top:722.10px;width:351.20px;height:1.00px;background:rgba(204,204,220,0.12);"></div>
<div class="r" style="left:1114.00px;top:751.80px;width:351.20px;height:1.00px;background:rgba(204,204,220,0.12);"></div>
<div class="r" style="left:1123.80px;top:645.60px;width:17.80px;height:5.20px;background:#73bf69;border-radius:3px;"></div>
<div class="t" style="left:1150.61px;top:639.07px;font-size:15.50px;color:#ccccdc;font-weight:normal;transform:scaleX(1.0082);transform-origin:0 0;-webkit-text-stroke:0.2px #ccccdc;">GPU 0</div>
<div class="t" style="left:1244.01px;top:639.07px;font-size:15.50px;color:#ccccdc;font-weight:normal;transform:scaleX(0.9251);transform-origin:0 0;-webkit-text-stroke:0.2px #ccccdc;">119 W</div>
<div class="t" style="left:1334.31px;top:639.07px;font-size:15.50px;color:#ccccdc;font-weight:normal;transform:scaleX(0.9251);transform-origin:0 0;-webkit-text-stroke:0.2px #ccccdc;">119 W</div>
<div class="t" style="left:1411.53px;top:639.07px;font-size:15.50px;color:#ccccdc;font-weight:normal;transform:scaleX(0.9648);transform-origin:0 0;-webkit-text-stroke:0.2px #ccccdc;">317 W</div>
<div class="r" style="left:1123.80px;top:675.30px;width:17.80px;height:5.20px;background:#f2cc0c;border-radius:3px;"></div>
<div class="t" style="left:1150.61px;top:668.77px;font-size:15.50px;color:#ccccdc;font-weight:normal;transform:scaleX(1.0082);transform-origin:0 0;-webkit-text-stroke:0.2px #ccccdc;">GPU 0</div>
<div class="t" style="left:1232.86px;top:668.77px;font-size:15.50px;color:#ccccdc;font-weight:normal;transform:scaleX(1.0712);transform-origin:0 0;-webkit-text-stroke:0.2px #ccccdc;">65.4 W</div>
<div class="t" style="left:1323.77px;top:668.77px;font-size:15.50px;color:#ccccdc;font-weight:normal;transform:scaleX(1.0588);transform-origin:0 0;-webkit-text-stroke:0.2px #ccccdc;">64.3 W</div>
<div class="t" style="left:1409.51px;top:668.77px;font-size:15.50px;color:#ccccdc;font-weight:normal;transform:scaleX(1.0100);transform-origin:0 0;-webkit-text-stroke:0.2px #ccccdc;">109 W</div>
<div class="r" style="left:1123.80px;top:705.00px;width:17.80px;height:5.20px;background:#8ab8ff;border-radius:3px;"></div>
<div class="t" style="left:1150.61px;top:698.47px;font-size:15.50px;color:#ccccdc;font-weight:normal;transform:scaleX(1.0082);transform-origin:0 0;-webkit-text-stroke:0.2px #ccccdc;">GPU 0</div>
<div class="t" style="left:1244.01px;top:698.47px;font-size:15.50px;color:#ccccdc;font-weight:normal;transform:scaleX(0.9251);transform-origin:0 0;-webkit-text-stroke:0.2px #ccccdc;">112 W</div>
<div class="t" style="left:1337.39px;top:698.47px;font-size:15.50px;color:#ccccdc;font-weight:normal;transform:scaleX(0.8562);transform-origin:0 0;-webkit-text-stroke:0.2px #ccccdc;">111 W</div>
<div class="t" style="left:1407.27px;top:698.47px;font-size:15.50px;color:#ccccdc;font-weight:normal;transform:scaleX(1.0599);transform-origin:0 0;-webkit-text-stroke:0.2px #ccccdc;">396 W</div>
<div class="r" style="left:1123.80px;top:734.70px;width:17.80px;height:5.20px;background:#ff780a;border-radius:3px;"></div>
<div class="t" style="left:1150.61px;top:728.17px;font-size:15.50px;color:#ccccdc;font-weight:normal;transform:scaleX(1.0082);transform-origin:0 0;-webkit-text-stroke:0.2px #ccccdc;">GPU 0</div>
<div class="t" style="left:1233.57px;top:728.17px;font-size:15.50px;color:#ccccdc;font-weight:normal;transform:scaleX(1.0567);transform-origin:0 0;-webkit-text-stroke:0.2px #ccccdc;">62.6 W</div>
<div class="t" style="left:1323.77px;top:728.17px;font-size:15.50px;color:#ccccdc;font-weight:normal;transform:scaleX(1.0588);transform-origin:0 0;-webkit-text-stroke:0.2px #ccccdc;">62.2 W</div>
<div class="t" style="left:1402.87px;top:728.17px;font-size:15.50px;color:#ccccdc;font-weight:normal;transform:scaleX(1.0567);transform-origin:0 0;-webkit-text-stroke:0.2px #ccccdc;">63.3 W</div>
<svg class="r" style="left:1487px;top:194px" width="483" height="330" viewBox="1487 194 483 330"><path d="M1525.91 521.63 A213.80 213.80 0 1 1 1931.89 521.63 L1884.51 505.96 A163.90 163.90 0 1 0 1573.29 505.96 Z" fill="#22252b"/><path d="M1525.91 521.63 A213.80 213.80 0 0 1 1810.37 256.83 L1791.36 302.97 A163.90 163.90 0 0 0 1573.29 505.96 Z" fill="#73bf69"/><path d="M1515.66 525.02 A224.60 224.60 0 0 1 1941.64 382.49 L1932.74 385.50 A215.20 215.20 0 0 0 1524.58 522.07 Z" fill="#73bf69"/><path d="M1941.64 382.49 A224.60 224.60 0 0 1 1949.95 414.73 L1940.70 416.39 A215.20 215.20 0 0 0 1932.74 385.50 Z" fill="#eab839"/><path d="M1949.95 414.73 A224.60 224.60 0 0 1 1942.14 525.02 L1933.22 522.07 A215.20 215.20 0 0 0 1940.70 416.39 Z" fill="#f2495c"/></svg>
<div class="t" style="left:1617.17px;top:436.29px;font-size:63.00px;color:#73bf69;font-weight:normal;transform:scaleX(1.0419);transform-origin:0 0;">60.2 °C</div>
<svg class="r" style="left:1487px;top:574px" width="483" height="330" viewBox="1487 574 483 330"><path d="M1525.91 901.63 A213.80 213.80 0 1 1 1931.89 901.63 L1884.51 885.96 A163.90 163.90 0 1 0 1573.29 885.96 Z" fill="#22252b"/><path d="M1525.91 901.63 A213.80 213.80 0 0 1 1515.36 824.06 L1565.20 826.49 A163.90 163.90 0 0 0 1573.29 885.96 Z" fill="#73bf69"/><path d="M1515.66 905.02 A224.60 224.60 0 0 1 1910.84 702.80 L1903.22 708.31 A215.20 215.20 0 0 0 1524.58 902.07 Z" fill="#73bf69"/><path d="M1910.84 702.80 A224.60 224.60 0 0 1 1953.50 834.50 L1944.10 834.50 A215.20 215.20 0 0 0 1903.22 708.31 Z" fill="#eab839"/><path d="M1953.50 834.50 A224.60 224.60 0 0 1 1942.14 905.02 L1933.22 902.07 A215.20 215.20 0 0 0 1944.10 834.50 Z" fill="#f2495c"/></svg>
<div class="t" style="left:1620.06px;top:812.42px;font-size:75.00px;color:#73bf69;font-weight:normal;transform:scaleX(0.9923);transform-origin:0 0;">230 W</div>
<div class="r" style="left:678.30px;top:381.00px;width:206.00px;height:158.50px;background:#181b1f;box-shadow:inset 0 0 0 1px rgba(204,204,220,0.15);border-radius:2px;box-shadow:inset 0 0 0 1px rgba(204,204,220,0.15),0 4px 8px rgba(0,0,0,0.35);"></div>
<div class="r" style="left:679.00px;top:416.60px;width:204.60px;height:1.00px;background:rgba(204,204,220,0.12);"></div>
<div class="t" style="left:688.45px;top:389.82px;font-size:16.00px;color:#ccccdc;font-weight:normal;transform:scaleX(1.0507);transform-origin:0 0;-webkit-text-stroke:0.15px #ccccdc;">2025-10-07 10:52:00</div>
<div class="r" style="left:688.90px;top:436.40px;width:17.70px;height:5.20px;background:#73bf69;border-radius:3px;"></div>
<div class="t" style="left:715.91px;top:430.12px;font-size:16.00px;color:#9c9ea9;font-weight:normal;transform:scaleX(0.9788);transform-origin:0 0;">GPU 0</div>
<div class="t" style="left:830.13px;top:430.12px;font-size:16.00px;color:#ccccdc;font-weight:normal;transform:scaleX(1.0451);transform-origin:0 0;-webkit-text-stroke:0.25px #ccccdc;">50 °C</div>
<div class="r" style="left:688.90px;top:462.57px;width:17.70px;height:5.20px;background:#f2cc0c;border-radius:3px;"></div>
<div class="t" style="left:715.91px;top:456.29px;font-size:16.00px;color:#9c9ea9;font-weight:normal;transform:scaleX(0.9788);transform-origin:0 0;">GPU 0</div>
<div class="t" style="left:830.13px;top:456.29px;font-size:16.00px;color:#ccccdc;font-weight:normal;transform:scaleX(1.0451);transform-origin:0 0;-webkit-text-stroke:0.25px #ccccdc;">50 °C</div>
<div class="r" style="left:688.90px;top:488.74px;width:17.70px;height:5.20px;background:#8ab8ff;border-radius:3px;"></div>
<div class="t" style="left:715.91px;top:482.46px;font-size:16.00px;color:#9c9ea9;font-weight:normal;transform:scaleX(0.9788);transform-origin:0 0;">GPU 0</div>
<div class="t" style="left:834.20px;top:482.46px;font-size:16.00px;color:#ccccdc;font-weight:normal;transform:scaleX(0.9423);transform-origin:0 0;-webkit-text-stroke:0.25px #ccccdc;">51 °C</div>
<div class="r" style="left:688.90px;top:514.91px;width:17.70px;height:5.20px;background:#ff780a;border-radius:3px;"></div>
<div class="t" style="left:715.91px;top:508.63px;font-size:16.00px;color:#9c9ea9;font-weight:normal;transform:scaleX(0.9788);transform-origin:0 0;">GPU 0</div>
<div class="t" style="left:830.13px;top:508.63px;font-size:16.00px;color:#ccccdc;font-weight:normal;transform:scaleX(1.0451);transform-origin:0 0;-webkit-text-stroke:0.25px #ccccdc;">50 °C</div>
</body></html>
